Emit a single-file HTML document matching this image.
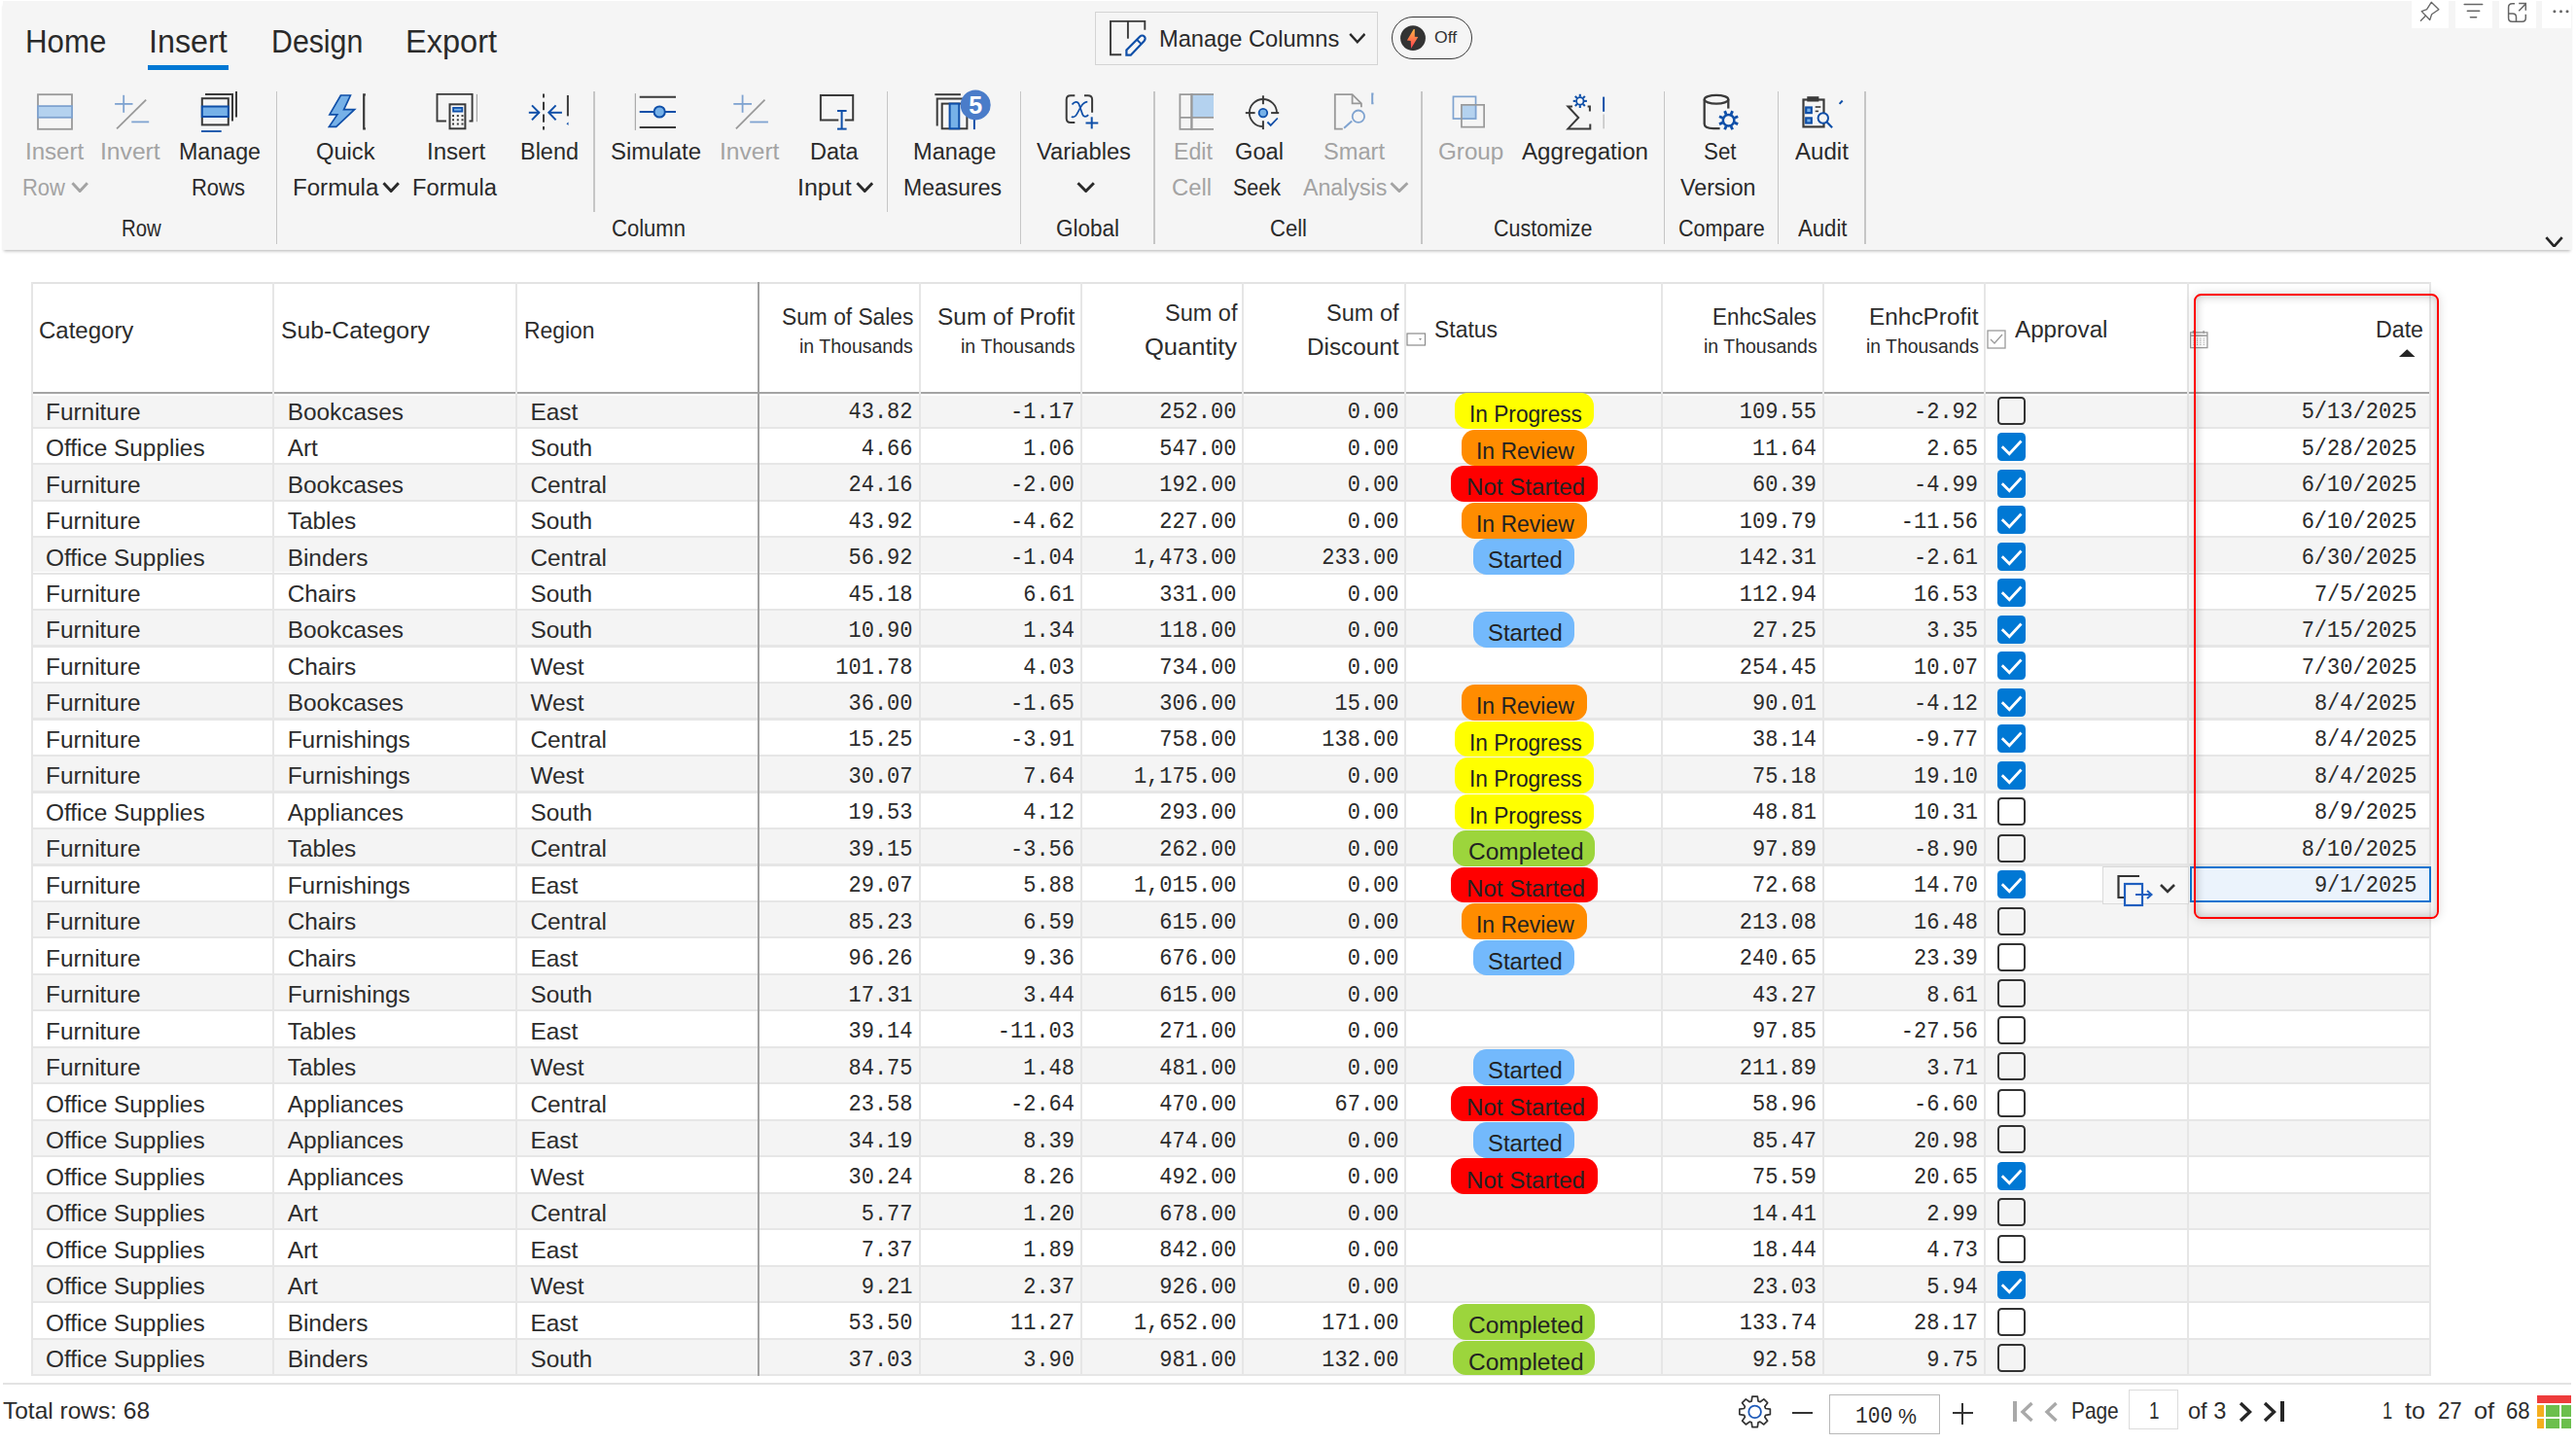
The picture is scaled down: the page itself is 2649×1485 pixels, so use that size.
<!DOCTYPE html><html><head><meta charset="utf-8"><style>
html,body{margin:0;padding:0;background:#fff;width:2649px;height:1485px;overflow:hidden}
#root{position:relative;width:2649px;height:1485px;overflow:hidden}
.t{position:absolute;white-space:nowrap}
.b{position:absolute;box-sizing:border-box}
</style></head><body><div id="root">
<div class="b" style="left:3.00px;top:1.00px;width:2641.00px;height:256.00px;background:#f5f5f5;box-shadow:0 2.5px 3px -1px rgba(0,0,0,0.25)"></div>
<div class="t" style="left:25.60px;top:20.41px;font-size:34.00px;line-height:44.20px;color:#2a2a2a;font-family:'Liberation Sans', sans-serif;transform:scale(0.9183,1.0000);transform-origin:0 33.89px;">Home</div>
<div class="t" style="left:153.00px;top:20.41px;font-size:34.00px;line-height:44.20px;color:#2a2a2a;font-family:'Liberation Sans', sans-serif;transform:scale(0.9490,1.0000);transform-origin:0 33.89px;">Insert</div>
<div class="t" style="left:278.50px;top:20.41px;font-size:34.00px;line-height:44.20px;color:#2a2a2a;font-family:'Liberation Sans', sans-serif;transform:scale(0.8910,1.0000);transform-origin:0 33.89px;">Design</div>
<div class="t" style="left:417.00px;top:20.41px;font-size:34.00px;line-height:44.20px;color:#2a2a2a;font-family:'Liberation Sans', sans-serif;transform:scale(0.9566,1.0000);transform-origin:0 33.89px;">Export</div>
<div class="b" style="left:151.50px;top:66.50px;width:83.40px;height:5.10px;background:#0078d4"></div>
<div class="b" style="left:1126.40px;top:11.50px;width:290.30px;height:55.90px;border:1.5px solid #d4d4d4"></div>
<div class="t" style="left:1191.70px;top:24.48px;font-size:24.30px;line-height:31.59px;color:#2a2a2a;font-family:'Liberation Sans', sans-serif;transform:scale(0.9730,1.0000);transform-origin:0 24.22px;">Manage Columns</div>
<svg class="b" style="left:1386.50px;top:33.40px" width="17.70" height="11.40" viewBox="0 0 17.7 11.4" fill="none"><polyline points="1.20,1.92 8.85,10.20 16.50,1.92" stroke="#2a2a2a" stroke-width="2.40" fill="none" stroke-linecap="butt" stroke-linejoin="miter"/></svg>
<div class="b" style="left:1431.30px;top:17.40px;width:82.50px;height:43.60px;border:1.6px solid #3a3a3a;border-radius:22px"></div>
<div class="t" style="left:1474.80px;top:28.35px;font-size:16.50px;line-height:21.45px;color:#333;font-family:'Liberation Sans', sans-serif;transform:scale(1.0668,1.0000);transform-origin:0 16.45px;">Off</div>
<div class="t" style="left:25.60px;top:140.98px;font-size:23.10px;line-height:30.03px;color:#a3a3a3;font-family:'Liberation Sans', sans-serif;transform:scale(1.0420,1.0000);transform-origin:0 23.02px;">Insert</div>
<div class="t" style="left:23.40px;top:177.58px;font-size:23.10px;line-height:30.03px;color:#a3a3a3;font-family:'Liberation Sans', sans-serif;transform:scale(0.9510,1.0000);transform-origin:0 23.02px;">Row</div>
<svg class="b" style="left:72.85px;top:185.85px" width="18.30" height="12.00" viewBox="0 0 18.3 12" fill="none"><polyline points="1.45,2.32 9.15,10.55 16.85,2.32" stroke="#a3a3a3" stroke-width="2.90" fill="none" stroke-linecap="butt" stroke-linejoin="miter"/></svg>
<div class="t" style="left:103.40px;top:140.98px;font-size:23.10px;line-height:30.03px;color:#a3a3a3;font-family:'Liberation Sans', sans-serif;transform:scale(1.0680,1.0000);transform-origin:0 23.02px;">Invert</div>
<div class="t" style="left:184.00px;top:140.98px;font-size:23.10px;line-height:30.03px;color:#2a2a2a;font-family:'Liberation Sans', sans-serif;transform:scale(1.0062,1.0000);transform-origin:0 23.02px;">Manage</div>
<div class="t" style="left:196.50px;top:177.58px;font-size:23.10px;line-height:30.03px;color:#2a2a2a;font-family:'Liberation Sans', sans-serif;transform:scale(0.9503,1.0000);transform-origin:0 23.02px;">Rows</div>
<div class="t" style="left:125.00px;top:220.48px;font-size:23.10px;line-height:30.03px;color:#2a2a2a;font-family:'Liberation Sans', sans-serif;transform:scale(0.8796,1.0000);transform-origin:0 23.02px;">Row</div>
<div class="t" style="left:325.00px;top:140.98px;font-size:23.10px;line-height:30.03px;color:#2a2a2a;font-family:'Liberation Sans', sans-serif;transform:scale(1.0256,1.0000);transform-origin:0 23.02px;">Quick</div>
<div class="t" style="left:301.00px;top:177.58px;font-size:23.10px;line-height:30.03px;color:#2a2a2a;font-family:'Liberation Sans', sans-serif;transform:scale(1.0433,1.0000);transform-origin:0 23.02px;">Formula</div>
<svg class="b" style="left:393.15px;top:185.85px" width="18.30" height="12.00" viewBox="0 0 18.3 12" fill="none"><polyline points="1.45,2.32 9.15,10.55 16.85,2.32" stroke="#2a2a2a" stroke-width="2.90" fill="none" stroke-linecap="butt" stroke-linejoin="miter"/></svg>
<div class="t" style="left:439.40px;top:140.98px;font-size:23.10px;line-height:30.03px;color:#2a2a2a;font-family:'Liberation Sans', sans-serif;transform:scale(1.0420,1.0000);transform-origin:0 23.02px;">Insert</div>
<div class="t" style="left:424.00px;top:177.58px;font-size:23.10px;line-height:30.03px;color:#2a2a2a;font-family:'Liberation Sans', sans-serif;transform:scale(1.0268,1.0000);transform-origin:0 23.02px;">Formula</div>
<div class="t" style="left:535.00px;top:140.98px;font-size:23.10px;line-height:30.03px;color:#2a2a2a;font-family:'Liberation Sans', sans-serif;transform:scale(1.0154,1.0000);transform-origin:0 23.02px;">Blend</div>
<div class="t" style="left:628.00px;top:140.98px;font-size:23.10px;line-height:30.03px;color:#2a2a2a;font-family:'Liberation Sans', sans-serif;transform:scale(1.0347,1.0000);transform-origin:0 23.02px;">Simulate</div>
<div class="t" style="left:739.60px;top:140.98px;font-size:23.10px;line-height:30.03px;color:#a3a3a3;font-family:'Liberation Sans', sans-serif;transform:scale(1.0628,1.0000);transform-origin:0 23.02px;">Invert</div>
<div class="t" style="left:833.00px;top:140.98px;font-size:23.10px;line-height:30.03px;color:#2a2a2a;font-family:'Liberation Sans', sans-serif;transform:scale(1.0162,1.0000);transform-origin:0 23.02px;">Data</div>
<div class="t" style="left:819.80px;top:177.58px;font-size:23.10px;line-height:30.03px;color:#2a2a2a;font-family:'Liberation Sans', sans-serif;transform:scale(1.0823,1.0000);transform-origin:0 23.02px;">Input</div>
<svg class="b" style="left:879.85px;top:185.85px" width="18.60" height="12.00" viewBox="0 0 18.6 12" fill="none"><polyline points="1.45,2.32 9.30,10.55 17.15,2.32" stroke="#2a2a2a" stroke-width="2.90" fill="none" stroke-linecap="butt" stroke-linejoin="miter"/></svg>
<div class="t" style="left:938.70px;top:140.98px;font-size:23.10px;line-height:30.03px;color:#2a2a2a;font-family:'Liberation Sans', sans-serif;transform:scale(1.0218,1.0000);transform-origin:0 23.02px;">Manage</div>
<div class="t" style="left:929.00px;top:177.58px;font-size:23.10px;line-height:30.03px;color:#2a2a2a;font-family:'Liberation Sans', sans-serif;transform:scale(0.9957,1.0000);transform-origin:0 23.02px;">Measures</div>
<div class="t" style="left:629.00px;top:220.48px;font-size:23.10px;line-height:30.03px;color:#2a2a2a;font-family:'Liberation Sans', sans-serif;transform:scale(0.9547,1.0000);transform-origin:0 23.02px;">Column</div>
<div class="t" style="left:1066.00px;top:140.98px;font-size:23.10px;line-height:30.03px;color:#2a2a2a;font-family:'Liberation Sans', sans-serif;transform:scale(1.0254,1.0000);transform-origin:0 23.02px;">Variables</div>
<svg class="b" style="left:1107.15px;top:185.85px" width="19.30" height="12.00" viewBox="0 0 19.3 12" fill="none"><polyline points="1.45,2.32 9.65,10.55 17.85,2.32" stroke="#2a2a2a" stroke-width="2.90" fill="none" stroke-linecap="butt" stroke-linejoin="miter"/></svg>
<div class="t" style="left:1086.00px;top:220.48px;font-size:23.10px;line-height:30.03px;color:#2a2a2a;font-family:'Liberation Sans', sans-serif;transform:scale(0.9733,1.0000);transform-origin:0 23.02px;">Global</div>
<div class="t" style="left:1207.00px;top:140.98px;font-size:23.10px;line-height:30.03px;color:#a3a3a3;font-family:'Liberation Sans', sans-serif;">Edit</div>
<div class="t" style="left:1204.50px;top:177.58px;font-size:23.10px;line-height:30.03px;color:#a3a3a3;font-family:'Liberation Sans', sans-serif;transform:scale(1.0301,1.0000);transform-origin:0 23.02px;">Cell</div>
<div class="t" style="left:1270.00px;top:140.98px;font-size:23.10px;line-height:30.03px;color:#2a2a2a;font-family:'Liberation Sans', sans-serif;transform:scale(1.0249,1.0000);transform-origin:0 23.02px;">Goal</div>
<div class="t" style="left:1268.00px;top:177.58px;font-size:23.10px;line-height:30.03px;color:#2a2a2a;font-family:'Liberation Sans', sans-serif;transform:scale(0.9299,1.0000);transform-origin:0 23.02px;">Seek</div>
<div class="t" style="left:1361.00px;top:140.98px;font-size:23.10px;line-height:30.03px;color:#a3a3a3;font-family:'Liberation Sans', sans-serif;transform:scale(1.0226,1.0000);transform-origin:0 23.02px;">Smart</div>
<div class="t" style="left:1339.80px;top:177.58px;font-size:23.10px;line-height:30.03px;color:#a3a3a3;font-family:'Liberation Sans', sans-serif;transform:scale(1.0044,1.0000);transform-origin:0 23.02px;">Analysis</div>
<svg class="b" style="left:1429.05px;top:185.85px" width="19.80" height="12.00" viewBox="0 0 19.8 12" fill="none"><polyline points="1.45,2.32 9.90,10.55 18.35,2.32" stroke="#a3a3a3" stroke-width="2.90" fill="none" stroke-linecap="butt" stroke-linejoin="miter"/></svg>
<div class="t" style="left:1306.00px;top:220.48px;font-size:23.10px;line-height:30.03px;color:#2a2a2a;font-family:'Liberation Sans', sans-serif;transform:scale(0.9547,1.0000);transform-origin:0 23.02px;">Cell</div>
<div class="t" style="left:1478.70px;top:140.98px;font-size:23.10px;line-height:30.03px;color:#a3a3a3;font-family:'Liberation Sans', sans-serif;transform:scale(1.0484,1.0000);transform-origin:0 23.02px;">Group</div>
<div class="t" style="left:1565.00px;top:140.98px;font-size:23.10px;line-height:30.03px;color:#2a2a2a;font-family:'Liberation Sans', sans-serif;transform:scale(1.0435,1.0000);transform-origin:0 23.02px;">Aggregation</div>
<div class="t" style="left:1536.00px;top:220.48px;font-size:23.10px;line-height:30.03px;color:#2a2a2a;font-family:'Liberation Sans', sans-serif;transform:scale(0.9310,1.0000);transform-origin:0 23.02px;">Customize</div>
<div class="t" style="left:1751.50px;top:140.98px;font-size:23.10px;line-height:30.03px;color:#2a2a2a;font-family:'Liberation Sans', sans-serif;transform:scale(0.9662,1.0000);transform-origin:0 23.02px;">Set</div>
<div class="t" style="left:1727.80px;top:177.58px;font-size:23.10px;line-height:30.03px;color:#2a2a2a;font-family:'Liberation Sans', sans-serif;transform:scale(1.0060,1.0000);transform-origin:0 23.02px;">Version</div>
<div class="t" style="left:1726.00px;top:220.48px;font-size:23.10px;line-height:30.03px;color:#2a2a2a;font-family:'Liberation Sans', sans-serif;transform:scale(0.9336,1.0000);transform-origin:0 23.02px;">Compare</div>
<div class="t" style="left:1846.30px;top:140.98px;font-size:23.10px;line-height:30.03px;color:#2a2a2a;font-family:'Liberation Sans', sans-serif;transform:scale(1.0428,1.0000);transform-origin:0 23.02px;">Audit</div>
<div class="t" style="left:1848.50px;top:220.48px;font-size:23.10px;line-height:30.03px;color:#2a2a2a;font-family:'Liberation Sans', sans-serif;transform:scale(0.9593,1.0000);transform-origin:0 23.02px;">Audit</div>
<div class="b" style="left:283.65px;top:93.50px;width:1.50px;height:157.50px;background:#c6c6c6"></div>
<div class="b" style="left:610.25px;top:93.50px;width:1.50px;height:124.30px;background:#c6c6c6"></div>
<div class="b" style="left:911.85px;top:93.50px;width:1.50px;height:124.30px;background:#c6c6c6"></div>
<div class="b" style="left:1048.85px;top:93.50px;width:1.50px;height:157.50px;background:#c6c6c6"></div>
<div class="b" style="left:1186.25px;top:93.50px;width:1.50px;height:157.50px;background:#c6c6c6"></div>
<div class="b" style="left:1461.25px;top:93.50px;width:1.50px;height:157.50px;background:#c6c6c6"></div>
<div class="b" style="left:1710.55px;top:93.50px;width:1.50px;height:157.50px;background:#c6c6c6"></div>
<div class="b" style="left:1827.85px;top:93.50px;width:1.50px;height:157.50px;background:#c6c6c6"></div>
<div class="b" style="left:1917.25px;top:93.50px;width:1.50px;height:157.50px;background:#c6c6c6"></div>
<svg class="b" style="left:2616.65px;top:241.65px" width="19.10" height="12.70" viewBox="0 0 19.1 12.7" fill="none"><polyline points="1.35,2.16 9.55,11.35 17.75,2.16" stroke="#262626" stroke-width="2.70" fill="none" stroke-linecap="butt" stroke-linejoin="miter"/></svg>
<div class="b" style="left:2480.00px;top:1.00px;width:38.00px;height:28.00px;background:#fff"></div>
<div class="b" style="left:2525.00px;top:1.00px;width:37.80px;height:28.00px;background:#fff"></div>
<div class="b" style="left:2570.00px;top:1.00px;width:38.00px;height:28.00px;background:#fff"></div>
<div class="b" style="left:2613.80px;top:1.00px;width:30.20px;height:28.00px;background:#fff"></div>
<svg class="b" style="left:0;top:0" width="2649" height="270" viewBox="0 0 2649 270" fill="none"><rect x="39.00" y="97.20" width="35.00" height="35.60" stroke="#999999" stroke-width="1.80" fill="none"/><rect x="39.00" y="109.10" width="35.00" height="11.70" stroke="#7fa3d0" stroke-width="1.80" fill="#b4d2ef"/><line x1="127.20" y1="97.80" x2="127.20" y2="115.80" stroke="#7fa3d0" stroke-width="1.80" stroke-linecap="butt"/><line x1="118.10" y1="106.90" x2="136.50" y2="106.90" stroke="#7fa3d0" stroke-width="1.80" stroke-linecap="butt"/><line x1="120.10" y1="132.40" x2="150.20" y2="102.60" stroke="#999999" stroke-width="1.80" stroke-linecap="butt"/><line x1="135.30" y1="125.40" x2="153.20" y2="125.40" stroke="#7fa3d0" stroke-width="1.80" stroke-linecap="butt"/><rect x="207.80" y="101.20" width="27.00" height="27.20" stroke="#3a3a3a" stroke-width="2.00" fill="none"/><rect x="207.80" y="109.50" width="27.00" height="10.50" stroke="#0f4fa8" stroke-width="2.00" fill="#76b1e8"/><path d="M211,97 L239,97 L239,124.5" stroke="#3a3a3a" stroke-width="2.00" fill="none" /><line x1="243.00" y1="94.10" x2="243.00" y2="120.60" stroke="#3a3a3a" stroke-width="2.00" stroke-linecap="butt"/><line x1="207.00" y1="135.00" x2="227.70" y2="135.00" stroke="#0f4fa8" stroke-width="1.80" stroke-linecap="butt"/><path d="M350.4,98 L360.4,98 L353.6,112.6 L364.6,112.6 L345.7,130.4 L338.4,130.4 L346.8,117.9 L338.9,117.9 Z" stroke="#0f4fa8" stroke-width="1.70" fill="#76b1e8" stroke-linejoin="miter"/><path d="M375.9,97.4 L374.2,97.4 L374.2,132.3 L375.9,132.3" stroke="#3a3a3a" stroke-width="2.20" fill="none" /><path d="M458.9,124.5 L449.5,124.5 L449.5,96.9 L485.6,96.9 L485.6,124.5 L482.5,124.5" stroke="#3a3a3a" stroke-width="1.90" fill="none" /><rect x="462.50" y="107.30" width="15.90" height="25.00" stroke="#3a3a3a" stroke-width="2.00" fill="none"/><rect x="466.10" y="110.90" width="9.20" height="3.70" stroke="#0f4fa8" stroke-width="1.80" fill="#76b1e8"/><rect x="465.00" y="118.10" width="2" height="2" fill="#3a3a3a"/><rect x="465.00" y="122.30" width="2" height="2" fill="#3a3a3a"/><rect x="465.00" y="126.50" width="2" height="2" fill="#3a3a3a"/><rect x="469.80" y="118.10" width="2" height="2" fill="#3a3a3a"/><rect x="469.80" y="122.30" width="2" height="2" fill="#3a3a3a"/><rect x="469.80" y="126.50" width="2" height="2" fill="#3a3a3a"/><rect x="474.50" y="118.10" width="2" height="2" fill="#3a3a3a"/><rect x="474.50" y="122.30" width="2" height="2" fill="#3a3a3a"/><rect x="474.50" y="126.50" width="2" height="2" fill="#3a3a3a"/><line x1="490.40" y1="96.90" x2="490.40" y2="125.20" stroke="#9a9a9a" stroke-width="1.00" stroke-linecap="butt"/><line x1="559.00" y1="96.40" x2="559.00" y2="133.60" stroke="#3a3a3a" stroke-width="2.00" stroke-linecap="butt"/><line x1="559" y1="96.4" x2="559" y2="133.6" stroke="#f5f5f5" stroke-width="2.4" stroke-dasharray="0 4.2 4.2 4.2" /><line x1="543.80" y1="115.80" x2="554.80" y2="115.80" stroke="#0f4fa8" stroke-width="2.00" stroke-linecap="butt"/><path d="M547,108.4 L554.3,115.8 L547,123.4" stroke="#0f4fa8" stroke-width="2.00" fill="none" /><line x1="564.30" y1="115.80" x2="577.90" y2="115.80" stroke="#0f4fa8" stroke-width="2.00" stroke-linecap="butt"/><path d="M571.6,108.4 L564.3,115.8 L571.6,123.4" stroke="#0f4fa8" stroke-width="2.00" fill="none" /><line x1="583.90" y1="98.00" x2="583.90" y2="119.40" stroke="#3a3a3a" stroke-width="2.00" stroke-linecap="butt"/><path d="M584.5,125.5 L582.5,127.3 L584.5,129 Z" fill="#0f4fa8"/><line x1="653.30" y1="96.10" x2="653.30" y2="133.90" stroke="#9a9a9a" stroke-width="1.00" stroke-linecap="butt"/><line x1="657.70" y1="99.80" x2="695.00" y2="99.80" stroke="#3a3a3a" stroke-width="2.00" stroke-linecap="butt"/><line x1="657.70" y1="130.90" x2="695.00" y2="130.90" stroke="#3a3a3a" stroke-width="2.00" stroke-linecap="butt"/><line x1="657.70" y1="115.00" x2="695.00" y2="115.00" stroke="#0f4fa8" stroke-width="2.00" stroke-linecap="butt"/><circle cx="678.20" cy="115.00" r="5.60" stroke="#0f4fa8" stroke-width="2.00" fill="#76b1e8"/><line x1="763.60" y1="97.60" x2="763.60" y2="115.80" stroke="#7fa3d0" stroke-width="1.80" stroke-linecap="butt"/><line x1="754.30" y1="106.90" x2="773.00" y2="106.90" stroke="#7fa3d0" stroke-width="1.80" stroke-linecap="butt"/><line x1="756.90" y1="132.40" x2="786.50" y2="102.60" stroke="#999999" stroke-width="1.80" stroke-linecap="butt"/><line x1="771.20" y1="125.50" x2="789.90" y2="125.50" stroke="#7fa3d0" stroke-width="1.80" stroke-linecap="butt"/><path d="M862.3,123.5 L843.9,123.5 L843.9,97.9 L877.2,97.9 L877.2,123.5 L868.8,123.5" stroke="#3a3a3a" stroke-width="2.00" fill="none" /><line x1="865.60" y1="114.00" x2="865.60" y2="132.60" stroke="#0f4fa8" stroke-width="2.00" stroke-linecap="butt"/><line x1="861.00" y1="114.00" x2="870.60" y2="114.00" stroke="#0f4fa8" stroke-width="2.00" stroke-linecap="butt"/><line x1="861.00" y1="132.60" x2="870.60" y2="132.60" stroke="#0f4fa8" stroke-width="2.00" stroke-linecap="butt"/><line x1="961.30" y1="97.20" x2="987.90" y2="97.20" stroke="#3a3a3a" stroke-width="2.00" stroke-linecap="butt"/><path d="M963.7,129.6 L963.7,101.5 L990,101.5" stroke="#3a3a3a" stroke-width="2.00" fill="none" /><rect x="968.70" y="106.60" width="25.70" height="25.70" stroke="#3a3a3a" stroke-width="2.00" fill="none"/><rect x="976.60" y="106.60" width="9.70" height="25.70" stroke="#0f4fa8" stroke-width="2.00" fill="#76b1e8"/><line x1="1001.90" y1="123.00" x2="1001.90" y2="133.10" stroke="#0f4fa8" stroke-width="2.00" stroke-linecap="butt"/><circle cx="1003.20" cy="107.90" r="15.50" stroke="none" stroke-width="0.00" fill="#4a7cc9"/><text x="1003.2" y="116.8" text-anchor="middle" font-family="Liberation Sans" font-weight="bold" font-size="25" fill="#fff">5</text><path d="M1105.3,98.2 L1101,98.2 Q1096.7,98.2 1096.7,102.5 L1096.7,121.8 Q1096.7,126.1 1101,126.1 L1105.3,126.1" stroke="#3a3a3a" stroke-width="2.00" fill="none" /><path d="M1115,98.2 L1118.8,98.2 Q1123.1,98.2 1123.1,102.5 L1123.1,115.7" stroke="#3a3a3a" stroke-width="2.00" fill="none" /><path d="M1102.5,107.5 C1104.5,104.3 1108.3,103.6 1109.6,107.2 L1113.2,117.6 C1114.3,120.6 1117.3,120.3 1119.2,118.1" stroke="#0f4fa8" stroke-width="1.70" fill="none" /><path d="M1118.3,104.6 C1115.2,104.8 1113,107 1111.2,110.3 L1107.2,117.6 C1105.8,120.2 1103.7,120.8 1101.8,119.9" stroke="#0f4fa8" stroke-width="1.70" fill="none" /><line x1="1122.70" y1="120.30" x2="1122.70" y2="132.40" stroke="#0f4fa8" stroke-width="2.00" stroke-linecap="butt"/><line x1="1116.50" y1="126.50" x2="1129.30" y2="126.50" stroke="#0f4fa8" stroke-width="2.00" stroke-linecap="butt"/><rect x="1225.4" y="96.2" width="22.6" height="24.7" fill="#b4d2ef"/><path d="M1248,97.1 L1213.4,97.1 L1213.4,132.8 L1248,132.8" stroke="#999999" stroke-width="1.80" fill="none" /><line x1="1213.40" y1="120.90" x2="1248.00" y2="120.90" stroke="#999999" stroke-width="1.80" stroke-linecap="butt"/><line x1="1225.40" y1="96.20" x2="1225.40" y2="133.70" stroke="#999999" stroke-width="2.40" stroke-linecap="butt"/><path d="M1313,116.1 A14.1,14.1 0 1 0 1298.9,130.2" stroke="#3a3a3a" stroke-width="1.80" fill="none" /><line x1="1298.90" y1="98.30" x2="1298.90" y2="107.20" stroke="#3a3a3a" stroke-width="2.00" stroke-linecap="butt"/><line x1="1280.80" y1="116.10" x2="1290.60" y2="116.10" stroke="#3a3a3a" stroke-width="2.00" stroke-linecap="butt"/><line x1="1307.10" y1="116.10" x2="1315.20" y2="116.10" stroke="#3a3a3a" stroke-width="2.00" stroke-linecap="butt"/><line x1="1298.90" y1="124.20" x2="1298.90" y2="133.10" stroke="#3a3a3a" stroke-width="2.00" stroke-linecap="butt"/><circle cx="1298.90" cy="116.10" r="4.30" stroke="#0f4fa8" stroke-width="1.80" fill="#76b1e8"/><path d="M1303.4,125.5 L1306.7,128.9 L1313.8,121.5" stroke="#0f4fa8" stroke-width="1.80" fill="none" /><path d="M1380.8,132.6 L1372.8,132.6 L1372.8,97.1 L1390.6,97.1 L1399.9,106.3 L1399.9,110.3" stroke="#999999" stroke-width="1.80" fill="none" /><path d="M1390.6,97.1 L1390.6,106.3 L1399.9,106.3" stroke="#999999" stroke-width="1.80" fill="none" /><circle cx="1396.90" cy="119.70" r="6.20" stroke="#7fa3d0" stroke-width="1.80" fill="none"/><line x1="1390.20" y1="124.60" x2="1382.10" y2="131.80" stroke="#7fa3d0" stroke-width="2.00" stroke-linecap="butt"/><path d="M1412.5,96.5 L1411.2,96.5 L1411.2,106.3 L1412.5,106.3" stroke="#7fa3d0" stroke-width="2.00" fill="none" /><rect x="1502.1" y="107" width="16.3" height="15.9" fill="#b4d2ef"/><rect x="1494.45" y="99.35" width="23.10" height="22.70" stroke="#7fa3d0" stroke-width="1.70" fill="none"/><rect x="1502.95" y="107.85" width="23.20" height="22.80" stroke="#999999" stroke-width="1.70" fill="none"/><path d="M1617,109.4 L1612.4,109.4 L1623.2,121 L1612.4,132.4 L1635.3,132.4 L1635.3,127.6" stroke="#3a3a3a" stroke-width="2.00" fill="none" stroke-linejoin="miter"/><path d="M1632.6,109.4 L1634.9,109.4 L1634.9,114.4" stroke="#3a3a3a" stroke-width="2.00" fill="none" /><circle cx="1624.80" cy="103.90" r="3.70" stroke="#0f4fa8" stroke-width="1.80" fill="none"/><line x1="1629.04" y1="103.90" x2="1631.90" y2="103.90" stroke="#0f4fa8" stroke-width="2.07"/><line x1="1627.80" y1="106.90" x2="1629.82" y2="108.92" stroke="#0f4fa8" stroke-width="2.07"/><line x1="1624.80" y1="108.14" x2="1624.80" y2="111.00" stroke="#0f4fa8" stroke-width="2.07"/><line x1="1621.80" y1="106.90" x2="1619.78" y2="108.92" stroke="#0f4fa8" stroke-width="2.07"/><line x1="1620.56" y1="103.90" x2="1617.70" y2="103.90" stroke="#0f4fa8" stroke-width="2.07"/><line x1="1621.80" y1="100.90" x2="1619.78" y2="98.88" stroke="#0f4fa8" stroke-width="2.07"/><line x1="1624.80" y1="99.66" x2="1624.80" y2="96.80" stroke="#0f4fa8" stroke-width="2.07"/><line x1="1627.80" y1="100.90" x2="1629.82" y2="98.88" stroke="#0f4fa8" stroke-width="2.07"/><line x1="1649.10" y1="99.60" x2="1649.10" y2="114.80" stroke="#0f4fa8" stroke-width="2.00" stroke-linecap="butt"/><line x1="1649.10" y1="117.50" x2="1649.10" y2="132.30" stroke="#aaaaaa" stroke-width="1.00" stroke-linecap="butt"/><ellipse cx="1765" cy="102.3" rx="12.3" ry="4.4" stroke="#3a3a3a" stroke-width="2.3" fill="none"/><path d="M1752.7,102.3 L1752.7,127.5 Q1752.7,131.9 1762,132.2 L1768.6,132.2" stroke="#3a3a3a" stroke-width="2.30" fill="none" /><line x1="1777.30" y1="102.30" x2="1777.30" y2="111.60" stroke="#3a3a3a" stroke-width="2.30" stroke-linecap="butt"/><circle cx="1777.60" cy="123.70" r="5.75" stroke="#0f4fa8" stroke-width="2.50" fill="none"/><line x1="1783.61" y1="126.19" x2="1787.21" y2="127.68" stroke="#0f4fa8" stroke-width="2.88"/><line x1="1780.09" y1="129.71" x2="1781.58" y2="133.31" stroke="#0f4fa8" stroke-width="2.88"/><line x1="1775.11" y1="129.71" x2="1773.62" y2="133.31" stroke="#0f4fa8" stroke-width="2.88"/><line x1="1771.59" y1="126.19" x2="1767.99" y2="127.68" stroke="#0f4fa8" stroke-width="2.88"/><line x1="1771.59" y1="121.21" x2="1767.99" y2="119.72" stroke="#0f4fa8" stroke-width="2.88"/><line x1="1775.11" y1="117.69" x2="1773.62" y2="114.09" stroke="#0f4fa8" stroke-width="2.88"/><line x1="1780.09" y1="117.69" x2="1781.58" y2="114.09" stroke="#0f4fa8" stroke-width="2.88"/><line x1="1783.61" y1="121.21" x2="1787.21" y2="119.72" stroke="#0f4fa8" stroke-width="2.88"/><rect x="1854.50" y="102.50" width="21.00" height="27.90" stroke="#3a3a3a" stroke-width="2.20" fill="none"/><rect x="1858.3" y="99.2" width="12.1" height="5.3" fill="#3a3a3a"/><rect x="1857.20" y="110.50" width="5.60" height="5.60" stroke="#0f4fa8" stroke-width="2.20" fill="#76b1e8"/><rect x="1857.20" y="121.40" width="5.60" height="5.10" stroke="#0f4fa8" stroke-width="2.20" fill="#76b1e8"/><line x1="1866.70" y1="110.00" x2="1872.30" y2="110.00" stroke="#3a3a3a" stroke-width="1.60" stroke-linecap="butt"/><line x1="1866.70" y1="114.40" x2="1870.10" y2="114.40" stroke="#3a3a3a" stroke-width="1.60" stroke-linecap="butt"/><circle cx="1874.80" cy="121.50" r="5.20" stroke="#0f4fa8" stroke-width="2.00" fill="#f5f5f5"/><line x1="1878.60" y1="125.50" x2="1884.10" y2="131.20" stroke="#0f4fa8" stroke-width="2.20" stroke-linecap="butt"/><line x1="1891.60" y1="106.90" x2="1894.70" y2="103.50" stroke="#0f4fa8" stroke-width="2.00" stroke-linecap="butt"/><path d="M1177.3,30.7 L1177.3,21.9 L1142,21.9 L1142,56.3 L1153.2,56.3" stroke="#3a3a3a" stroke-width="1.90" fill="none" /><line x1="1159.90" y1="21.90" x2="1159.90" y2="39.70" stroke="#3a3a3a" stroke-width="1.90" stroke-linecap="butt"/><path d="M1158.4,56.7 L1158.4,51.4 L1172.3,37.5 A3.1,3.1 0 0 1 1176.7,41.9 L1162.8,56.7 Z" stroke="#0f4fa8" stroke-width="2.20" fill="none" stroke-linejoin="miter"/><line x1="1169.10" y1="40.70" x2="1173.50" y2="45.10" stroke="#0f4fa8" stroke-width="2.00" stroke-linecap="butt"/><defs><linearGradient id="lg" x1="0" y1="0" x2="0" y2="1"><stop offset="0" stop-color="#fdb643"/><stop offset="1" stop-color="#ff3d50"/></linearGradient></defs><circle cx="1453.00" cy="39.20" r="12.90" stroke="none" stroke-width="0.00" fill="#333333"/><path d="M1453.7,29.9 L1454.8,29.9 L1454.8,37.8 L1458.3,38.1 L1451.1,49.8 L1450.7,42 L1446.9,41.4 Z" fill="url(#lg)"/><path d="M2490.2,11.6 L2495.6,9.7 L2500.2,2.3 L2507.9,9.7 L2500.6,14.7 L2498.7,20.5 Z" stroke="#666666" stroke-width="1.30" fill="none" stroke-linejoin="round"/><line x1="2489.40" y1="21.20" x2="2494.40" y2="16.20" stroke="#666666" stroke-width="1.30" stroke-linecap="round"/><line x1="2534.20" y1="4.60" x2="2552.70" y2="4.60" stroke="#666666" stroke-width="1.50" stroke-linecap="round"/><line x1="2537.30" y1="11.20" x2="2549.70" y2="11.20" stroke="#666666" stroke-width="1.50" stroke-linecap="round"/><line x1="2540.40" y1="17.80" x2="2546.60" y2="17.80" stroke="#666666" stroke-width="1.50" stroke-linecap="round"/><path d="M2586,3.7 L2583.4,3.7 Q2579.6,3.7 2579.6,7.5 L2579.6,18.4 Q2579.6,22.2 2583.4,22.2 L2593.5,22.2 Q2597.3,22.2 2597.3,18.4 L2597.3,14.7" stroke="#666666" stroke-width="1.50" fill="none" /><path d="M2579.6,13.9 L2583.8,13.9 Q2587.5,13.9 2587.5,17.6 L2587.5,22.2" stroke="#666666" stroke-width="1.50" fill="none" /><path d="M2590.2,11.2 L2597.2,3.9 M2590.2,3.6 L2597.3,3.6 L2597.3,10.8" stroke="#666666" stroke-width="1.50" fill="none" /><circle cx="2626.90" cy="11.70" r="1.50" stroke="none" stroke-width="0.00" fill="#666666"/><circle cx="2633.50" cy="11.70" r="1.50" stroke="none" stroke-width="0.00" fill="#666666"/><circle cx="2640.00" cy="11.70" r="1.50" stroke="none" stroke-width="0.00" fill="#666666"/></svg>
<div class="b" style="left:33.00px;top:403.30px;width:2466.00px;height:35.28px;background:#f4f4f4"></div>
<div class="b" style="left:33.00px;top:438.58px;width:2466.00px;height:2.20px;background:#e6e6e6"></div>
<div class="b" style="left:33.00px;top:476.06px;width:2466.00px;height:2.20px;background:#e6e6e6"></div>
<div class="b" style="left:33.00px;top:478.26px;width:2466.00px;height:35.28px;background:#f4f4f4"></div>
<div class="b" style="left:33.00px;top:513.54px;width:2466.00px;height:2.20px;background:#e6e6e6"></div>
<div class="b" style="left:33.00px;top:551.02px;width:2466.00px;height:2.20px;background:#e6e6e6"></div>
<div class="b" style="left:33.00px;top:553.22px;width:2466.00px;height:35.28px;background:#f4f4f4"></div>
<div class="b" style="left:33.00px;top:588.50px;width:2466.00px;height:2.20px;background:#e6e6e6"></div>
<div class="b" style="left:33.00px;top:625.98px;width:2466.00px;height:2.20px;background:#e6e6e6"></div>
<div class="b" style="left:33.00px;top:628.18px;width:2466.00px;height:35.28px;background:#f4f4f4"></div>
<div class="b" style="left:33.00px;top:663.46px;width:2466.00px;height:2.20px;background:#e6e6e6"></div>
<div class="b" style="left:33.00px;top:700.94px;width:2466.00px;height:2.20px;background:#e6e6e6"></div>
<div class="b" style="left:33.00px;top:703.14px;width:2466.00px;height:35.28px;background:#f4f4f4"></div>
<div class="b" style="left:33.00px;top:738.42px;width:2466.00px;height:2.20px;background:#e6e6e6"></div>
<div class="b" style="left:33.00px;top:775.90px;width:2466.00px;height:2.20px;background:#e6e6e6"></div>
<div class="b" style="left:33.00px;top:778.10px;width:2466.00px;height:35.28px;background:#f4f4f4"></div>
<div class="b" style="left:33.00px;top:813.38px;width:2466.00px;height:2.20px;background:#e6e6e6"></div>
<div class="b" style="left:33.00px;top:850.86px;width:2466.00px;height:2.20px;background:#e6e6e6"></div>
<div class="b" style="left:33.00px;top:853.06px;width:2466.00px;height:35.28px;background:#f4f4f4"></div>
<div class="b" style="left:33.00px;top:888.34px;width:2466.00px;height:2.20px;background:#e6e6e6"></div>
<div class="b" style="left:33.00px;top:925.82px;width:2466.00px;height:2.20px;background:#e6e6e6"></div>
<div class="b" style="left:33.00px;top:928.02px;width:2466.00px;height:35.28px;background:#f4f4f4"></div>
<div class="b" style="left:33.00px;top:963.30px;width:2466.00px;height:2.20px;background:#e6e6e6"></div>
<div class="b" style="left:33.00px;top:1000.78px;width:2466.00px;height:2.20px;background:#e6e6e6"></div>
<div class="b" style="left:33.00px;top:1002.98px;width:2466.00px;height:35.28px;background:#f4f4f4"></div>
<div class="b" style="left:33.00px;top:1038.26px;width:2466.00px;height:2.20px;background:#e6e6e6"></div>
<div class="b" style="left:33.00px;top:1075.74px;width:2466.00px;height:2.20px;background:#e6e6e6"></div>
<div class="b" style="left:33.00px;top:1077.94px;width:2466.00px;height:35.28px;background:#f4f4f4"></div>
<div class="b" style="left:33.00px;top:1113.22px;width:2466.00px;height:2.20px;background:#e6e6e6"></div>
<div class="b" style="left:33.00px;top:1150.70px;width:2466.00px;height:2.20px;background:#e6e6e6"></div>
<div class="b" style="left:33.00px;top:1152.90px;width:2466.00px;height:35.28px;background:#f4f4f4"></div>
<div class="b" style="left:33.00px;top:1188.18px;width:2466.00px;height:2.20px;background:#e6e6e6"></div>
<div class="b" style="left:33.00px;top:1225.66px;width:2466.00px;height:2.20px;background:#e6e6e6"></div>
<div class="b" style="left:33.00px;top:1227.86px;width:2466.00px;height:35.28px;background:#f4f4f4"></div>
<div class="b" style="left:33.00px;top:1263.14px;width:2466.00px;height:2.20px;background:#e6e6e6"></div>
<div class="b" style="left:33.00px;top:1300.62px;width:2466.00px;height:2.20px;background:#e6e6e6"></div>
<div class="b" style="left:33.00px;top:1302.82px;width:2466.00px;height:35.28px;background:#f4f4f4"></div>
<div class="b" style="left:33.00px;top:1338.10px;width:2466.00px;height:2.20px;background:#e6e6e6"></div>
<div class="b" style="left:33.00px;top:1375.58px;width:2466.00px;height:2.20px;background:#e6e6e6"></div>
<div class="b" style="left:33.00px;top:1377.78px;width:2466.00px;height:35.28px;background:#f4f4f4"></div>
<div class="b" style="left:33.00px;top:1413.06px;width:2466.00px;height:2.20px;background:#e6e6e6"></div>
<div class="b" style="left:33.00px;top:402.50px;width:2466.00px;height:4.50px;background:#fff"></div>
<div class="b" style="left:33.00px;top:402.50px;width:2466.00px;height:2.50px;background:#a4a4a4"></div>
<div class="b" style="left:32.00px;top:289.80px;width:2468.00px;height:2.00px;background:#e3e3e3"></div>
<div class="b" style="left:32.00px;top:289.80px;width:2.00px;height:1125.46px;background:#e6e6e6"></div>
<div class="b" style="left:279.60px;top:289.80px;width:2.00px;height:1125.46px;background:#e6e6e6"></div>
<div class="b" style="left:529.70px;top:289.80px;width:2.00px;height:1125.46px;background:#e6e6e6"></div>
<div class="b" style="left:778.50px;top:289.80px;width:2.00px;height:1125.46px;background:#a2a2a2"></div>
<div class="b" style="left:944.60px;top:289.80px;width:2.00px;height:1125.46px;background:#e6e6e6"></div>
<div class="b" style="left:1110.60px;top:289.80px;width:2.00px;height:1125.46px;background:#e6e6e6"></div>
<div class="b" style="left:1277.20px;top:289.80px;width:2.00px;height:1125.46px;background:#e6e6e6"></div>
<div class="b" style="left:1443.80px;top:289.80px;width:2.00px;height:1125.46px;background:#e6e6e6"></div>
<div class="b" style="left:1707.70px;top:289.80px;width:2.00px;height:1125.46px;background:#e6e6e6"></div>
<div class="b" style="left:1873.70px;top:289.80px;width:2.00px;height:1125.46px;background:#e6e6e6"></div>
<div class="b" style="left:2040.30px;top:289.80px;width:2.00px;height:1125.46px;background:#e6e6e6"></div>
<div class="b" style="left:2248.80px;top:289.80px;width:2.00px;height:1125.46px;background:#e6e6e6"></div>
<div class="b" style="left:2498.00px;top:289.80px;width:2.00px;height:1125.46px;background:#e6e6e6"></div>
<div class="t" style="left:40.20px;top:323.88px;font-size:24.60px;line-height:31.98px;color:#2c2c2c;font-family:'Liberation Sans', sans-serif;transform:scale(0.9757,1.0000);transform-origin:0 24.52px;">Category</div>
<div class="t" style="left:288.80px;top:324.38px;font-size:24.60px;line-height:31.98px;color:#2c2c2c;font-family:'Liberation Sans', sans-serif;transform:scale(1.0067,1.0000);transform-origin:0 24.52px;">Sub-Category</div>
<div class="t" style="left:538.80px;top:324.38px;font-size:24.60px;line-height:31.98px;color:#2c2c2c;font-family:'Liberation Sans', sans-serif;transform:scale(0.9287,1.0000);transform-origin:0 24.52px;">Region</div>
<div class="t" style="left:803.70px;top:310.28px;font-size:24.60px;line-height:31.98px;color:#2c2c2c;font-family:'Liberation Sans', sans-serif;transform:scale(0.9255,1.0000);transform-origin:0 24.52px;">Sum of Sales</div>
<div class="t" style="left:822.30px;top:343.47px;font-size:20.50px;line-height:26.65px;color:#2c2c2c;font-family:'Liberation Sans', sans-serif;transform:scale(0.9518,1.0000);transform-origin:0 20.43px;">in Thousands</div>
<div class="t" style="left:964.30px;top:310.28px;font-size:24.60px;line-height:31.98px;color:#2c2c2c;font-family:'Liberation Sans', sans-serif;transform:scale(0.9938,1.0000);transform-origin:0 24.52px;">Sum of Profit</div>
<div class="t" style="left:988.00px;top:343.47px;font-size:20.50px;line-height:26.65px;color:#2c2c2c;font-family:'Liberation Sans', sans-serif;transform:scale(0.9583,1.0000);transform-origin:0 20.43px;">in Thousands</div>
<div class="t" style="left:1197.50px;top:305.78px;font-size:24.60px;line-height:31.98px;color:#2c2c2c;font-family:'Liberation Sans', sans-serif;transform:scale(0.9553,1.0000);transform-origin:0 24.52px;">Sum of</div>
<div class="t" style="left:1177.00px;top:341.08px;font-size:24.60px;line-height:31.98px;color:#2c2c2c;font-family:'Liberation Sans', sans-serif;transform:scale(1.0370,1.0000);transform-origin:0 24.52px;">Quantity</div>
<div class="t" style="left:1363.80px;top:305.78px;font-size:24.60px;line-height:31.98px;color:#2c2c2c;font-family:'Liberation Sans', sans-serif;transform:scale(0.9579,1.0000);transform-origin:0 24.52px;">Sum of</div>
<div class="t" style="left:1344.00px;top:341.08px;font-size:24.60px;line-height:31.98px;color:#2c2c2c;font-family:'Liberation Sans', sans-serif;transform:scale(0.9873,1.0000);transform-origin:0 24.52px;">Discount</div>
<div class="t" style="left:1475.00px;top:323.38px;font-size:24.60px;line-height:31.98px;color:#2c2c2c;font-family:'Liberation Sans', sans-serif;transform:scale(0.9320,1.0000);transform-origin:0 24.52px;">Status</div>
<div class="t" style="left:1761.30px;top:309.68px;font-size:24.60px;line-height:31.98px;color:#2c2c2c;font-family:'Liberation Sans', sans-serif;transform:scale(0.9106,1.0000);transform-origin:0 24.52px;">EnhcSales</div>
<div class="t" style="left:1751.70px;top:342.87px;font-size:20.50px;line-height:26.65px;color:#2c2c2c;font-family:'Liberation Sans', sans-serif;transform:scale(0.9510,1.0000);transform-origin:0 20.43px;">in Thousands</div>
<div class="t" style="left:1922.00px;top:309.68px;font-size:24.60px;line-height:31.98px;color:#2c2c2c;font-family:'Liberation Sans', sans-serif;transform:scale(0.9914,1.0000);transform-origin:0 24.52px;">EnhcProfit</div>
<div class="t" style="left:1918.50px;top:342.87px;font-size:20.50px;line-height:26.65px;color:#2c2c2c;font-family:'Liberation Sans', sans-serif;transform:scale(0.9453,1.0000);transform-origin:0 20.43px;">in Thousands</div>
<div class="t" style="left:2072.00px;top:323.48px;font-size:24.60px;line-height:31.98px;color:#2c2c2c;font-family:'Liberation Sans', sans-serif;transform:scale(0.9836,1.0000);transform-origin:0 24.52px;">Approval</div>
<div class="t" style="left:2443.00px;top:323.48px;font-size:24.60px;line-height:31.98px;color:#2c2c2c;font-family:'Liberation Sans', sans-serif;transform:scale(0.9431,1.0000);transform-origin:0 24.52px;">Date</div>
<svg class="b" style="left:2466.00px;top:359.00px" width="18.50" height="8.50" viewBox="0 0 18.5 8.5" fill="none"><polygon points="1,8 9.25,0.3 17.5,8" fill="#252525"/></svg>
<svg class="b" style="left:1446.00px;top:342.00px" width="21.00" height="14.00" viewBox="0 0 21 14" fill="none"><rect x="1" y="1" width="18.5" height="12" stroke="#8a8a8a" stroke-width="1.2"/><polyline points="13,6 14.5,8 16,6" fill="#8a8a8a"/></svg>
<svg class="b" style="left:2043.00px;top:339.00px" width="21.00" height="20.00" viewBox="0 0 21 20" fill="none"><rect x="1" y="1" width="18" height="18" stroke="#9a9a9a" stroke-width="1.3"/><polyline points="4,10 8,14 16,5" stroke="#9a9a9a" stroke-width="1.3"/></svg>
<svg class="b" style="left:2250.00px;top:338.00px" width="22.00" height="22.00" viewBox="0 0 22 22" fill="none"><rect x="2.6" y="3.9" width="17.3" height="15.7" stroke="#999" stroke-width="1.3"/><line x1="2.6" y1="7.2" x2="19.9" y2="7.2" stroke="#999" stroke-width="1.5"/><line x1="5.4" y1="2" x2="5.4" y2="5" stroke="#999" stroke-width="1.3"/><line x1="16.1" y1="2" x2="16.1" y2="5" stroke="#999" stroke-width="1.3"/><line x1="6.0" y1="9.5" x2="6.0" y2="17.5" stroke="#aaa" stroke-width="1.1" stroke-dasharray="1.1 1"/><line x1="9.6" y1="9.5" x2="9.6" y2="17.5" stroke="#aaa" stroke-width="1.1" stroke-dasharray="1.1 1"/><line x1="12.9" y1="9.5" x2="12.9" y2="17.5" stroke="#aaa" stroke-width="1.1" stroke-dasharray="1.1 1"/><line x1="16.3" y1="9.5" x2="16.3" y2="17.5" stroke="#aaa" stroke-width="1.1" stroke-dasharray="1.1 1"/></svg>
<div class="b" style="left:2252.40px;top:890.94px;width:247.50px;height:37.20px;background:#ebf3fc;border:2px solid #0f74d0"></div>
<div class="t" style="left:47.00px;top:407.58px;font-size:24.40px;line-height:31.72px;color:#2c2c2c;font-family:'Liberation Sans', sans-serif;">Furniture</div>
<div class="t" style="left:295.70px;top:407.58px;font-size:24.40px;line-height:31.72px;color:#2c2c2c;font-family:'Liberation Sans', sans-serif;">Bookcases</div>
<div class="t" style="left:545.40px;top:407.58px;font-size:24.40px;line-height:31.72px;color:#2c2c2c;font-family:'Liberation Sans', sans-serif;">East</div>
<div class="t" style="left:872.50px;top:411.15px;font-size:22.00px;line-height:28.60px;color:#2c2c2c;font-family:'Liberation Mono', monospace;transform:scale(1.0000,1.1000);transform-origin:0 20.15px;">43.82</div>
<div class="t" style="left:1039.00px;top:411.15px;font-size:22.00px;line-height:28.60px;color:#2c2c2c;font-family:'Liberation Mono', monospace;transform:scale(1.0000,1.1000);transform-origin:0 20.15px;">-1.17</div>
<div class="t" style="left:1192.28px;top:411.15px;font-size:22.00px;line-height:28.60px;color:#2c2c2c;font-family:'Liberation Mono', monospace;transform:scale(1.0000,1.1000);transform-origin:0 20.15px;">252.00</div>
<div class="t" style="left:1385.70px;top:411.15px;font-size:22.00px;line-height:28.60px;color:#2c2c2c;font-family:'Liberation Mono', monospace;transform:scale(1.0000,1.1000);transform-origin:0 20.15px;">0.00</div>
<div class="t" style="left:1788.78px;top:411.15px;font-size:22.00px;line-height:28.60px;color:#2c2c2c;font-family:'Liberation Mono', monospace;transform:scale(1.0000,1.1000);transform-origin:0 20.15px;">109.55</div>
<div class="t" style="left:1968.00px;top:411.15px;font-size:22.00px;line-height:28.60px;color:#2c2c2c;font-family:'Liberation Mono', monospace;transform:scale(1.0000,1.1000);transform-origin:0 20.15px;">-2.92</div>
<div class="t" style="left:2366.68px;top:411.15px;font-size:22.00px;line-height:28.60px;color:#2c2c2c;font-family:'Liberation Mono', monospace;transform:scale(1.0000,1.1000);transform-origin:0 20.15px;">5/13/2025</div>
<div class="b" style="left:1495.90px;top:404.40px;width:142.80px;height:36.70px;background:#ffff00;border-radius:13.5px"></div>
<div class="t" style="left:1510.80px;top:410.48px;font-size:24.40px;line-height:31.72px;color:#222;font-family:'Liberation Sans', sans-serif;transform:scale(0.9298,1.0000);transform-origin:0 24.32px;">In Progress</div>
<div class="b" style="left:2054.00px;top:407.80px;width:29.00px;height:29.00px;border:2px solid #333;border-radius:4.5px"></div>
<div class="t" style="left:47.00px;top:445.06px;font-size:24.40px;line-height:31.72px;color:#2c2c2c;font-family:'Liberation Sans', sans-serif;">Office Supplies</div>
<div class="t" style="left:295.70px;top:445.06px;font-size:24.40px;line-height:31.72px;color:#2c2c2c;font-family:'Liberation Sans', sans-serif;">Art</div>
<div class="t" style="left:545.40px;top:445.06px;font-size:24.40px;line-height:31.72px;color:#2c2c2c;font-family:'Liberation Sans', sans-serif;">South</div>
<div class="t" style="left:885.70px;top:448.63px;font-size:22.00px;line-height:28.60px;color:#2c2c2c;font-family:'Liberation Mono', monospace;transform:scale(1.0000,1.1000);transform-origin:0 20.15px;">4.66</div>
<div class="t" style="left:1052.20px;top:448.63px;font-size:22.00px;line-height:28.60px;color:#2c2c2c;font-family:'Liberation Mono', monospace;transform:scale(1.0000,1.1000);transform-origin:0 20.15px;">1.06</div>
<div class="t" style="left:1192.28px;top:448.63px;font-size:22.00px;line-height:28.60px;color:#2c2c2c;font-family:'Liberation Mono', monospace;transform:scale(1.0000,1.1000);transform-origin:0 20.15px;">547.00</div>
<div class="t" style="left:1385.70px;top:448.63px;font-size:22.00px;line-height:28.60px;color:#2c2c2c;font-family:'Liberation Mono', monospace;transform:scale(1.0000,1.1000);transform-origin:0 20.15px;">0.00</div>
<div class="t" style="left:1802.00px;top:448.63px;font-size:22.00px;line-height:28.60px;color:#2c2c2c;font-family:'Liberation Mono', monospace;transform:scale(1.0000,1.1000);transform-origin:0 20.15px;">11.64</div>
<div class="t" style="left:1981.20px;top:448.63px;font-size:22.00px;line-height:28.60px;color:#2c2c2c;font-family:'Liberation Mono', monospace;transform:scale(1.0000,1.1000);transform-origin:0 20.15px;">2.65</div>
<div class="t" style="left:2366.68px;top:448.63px;font-size:22.00px;line-height:28.60px;color:#2c2c2c;font-family:'Liberation Mono', monospace;transform:scale(1.0000,1.1000);transform-origin:0 20.15px;">5/28/2025</div>
<div class="b" style="left:1502.90px;top:441.88px;width:128.80px;height:36.70px;background:#ff8c00;border-radius:13.5px"></div>
<div class="t" style="left:1518.40px;top:447.96px;font-size:24.40px;line-height:31.72px;color:#222;font-family:'Liberation Sans', sans-serif;transform:scale(0.9404,1.0000);transform-origin:0 24.32px;">In Review</div>
<svg class="b" style="left:2054.00px;top:445.28px" width="29.00" height="29.00" viewBox="0 0 29 29" fill="none"><rect x="0" y="0" width="29" height="29" rx="4.5" fill="#0078d4"/><polyline points="4.8,14.3 12.3,21.8 24.5,8.5" stroke="#fff" stroke-width="2.8" fill="none"/></svg>
<div class="t" style="left:47.00px;top:482.54px;font-size:24.40px;line-height:31.72px;color:#2c2c2c;font-family:'Liberation Sans', sans-serif;">Furniture</div>
<div class="t" style="left:295.70px;top:482.54px;font-size:24.40px;line-height:31.72px;color:#2c2c2c;font-family:'Liberation Sans', sans-serif;">Bookcases</div>
<div class="t" style="left:545.40px;top:482.54px;font-size:24.40px;line-height:31.72px;color:#2c2c2c;font-family:'Liberation Sans', sans-serif;">Central</div>
<div class="t" style="left:872.50px;top:486.11px;font-size:22.00px;line-height:28.60px;color:#2c2c2c;font-family:'Liberation Mono', monospace;transform:scale(1.0000,1.1000);transform-origin:0 20.15px;">24.16</div>
<div class="t" style="left:1039.00px;top:486.11px;font-size:22.00px;line-height:28.60px;color:#2c2c2c;font-family:'Liberation Mono', monospace;transform:scale(1.0000,1.1000);transform-origin:0 20.15px;">-2.00</div>
<div class="t" style="left:1192.28px;top:486.11px;font-size:22.00px;line-height:28.60px;color:#2c2c2c;font-family:'Liberation Mono', monospace;transform:scale(1.0000,1.1000);transform-origin:0 20.15px;">192.00</div>
<div class="t" style="left:1385.70px;top:486.11px;font-size:22.00px;line-height:28.60px;color:#2c2c2c;font-family:'Liberation Mono', monospace;transform:scale(1.0000,1.1000);transform-origin:0 20.15px;">0.00</div>
<div class="t" style="left:1802.00px;top:486.11px;font-size:22.00px;line-height:28.60px;color:#2c2c2c;font-family:'Liberation Mono', monospace;transform:scale(1.0000,1.1000);transform-origin:0 20.15px;">60.39</div>
<div class="t" style="left:1968.00px;top:486.11px;font-size:22.00px;line-height:28.60px;color:#2c2c2c;font-family:'Liberation Mono', monospace;transform:scale(1.0000,1.1000);transform-origin:0 20.15px;">-4.99</div>
<div class="t" style="left:2366.68px;top:486.11px;font-size:22.00px;line-height:28.60px;color:#2c2c2c;font-family:'Liberation Mono', monospace;transform:scale(1.0000,1.1000);transform-origin:0 20.15px;">6/10/2025</div>
<div class="b" style="left:1492.05px;top:479.36px;width:150.50px;height:36.70px;background:#ff0000;border-radius:13.5px"></div>
<div class="t" style="left:1507.80px;top:485.44px;font-size:24.40px;line-height:31.72px;color:#222;font-family:'Liberation Sans', sans-serif;transform:scale(0.9885,1.0000);transform-origin:0 24.32px;">Not Started</div>
<svg class="b" style="left:2054.00px;top:482.76px" width="29.00" height="29.00" viewBox="0 0 29 29" fill="none"><rect x="0" y="0" width="29" height="29" rx="4.5" fill="#0078d4"/><polyline points="4.8,14.3 12.3,21.8 24.5,8.5" stroke="#fff" stroke-width="2.8" fill="none"/></svg>
<div class="t" style="left:47.00px;top:520.02px;font-size:24.40px;line-height:31.72px;color:#2c2c2c;font-family:'Liberation Sans', sans-serif;">Furniture</div>
<div class="t" style="left:295.70px;top:520.02px;font-size:24.40px;line-height:31.72px;color:#2c2c2c;font-family:'Liberation Sans', sans-serif;">Tables</div>
<div class="t" style="left:545.40px;top:520.02px;font-size:24.40px;line-height:31.72px;color:#2c2c2c;font-family:'Liberation Sans', sans-serif;">South</div>
<div class="t" style="left:872.50px;top:523.59px;font-size:22.00px;line-height:28.60px;color:#2c2c2c;font-family:'Liberation Mono', monospace;transform:scale(1.0000,1.1000);transform-origin:0 20.15px;">43.92</div>
<div class="t" style="left:1039.00px;top:523.59px;font-size:22.00px;line-height:28.60px;color:#2c2c2c;font-family:'Liberation Mono', monospace;transform:scale(1.0000,1.1000);transform-origin:0 20.15px;">-4.62</div>
<div class="t" style="left:1192.28px;top:523.59px;font-size:22.00px;line-height:28.60px;color:#2c2c2c;font-family:'Liberation Mono', monospace;transform:scale(1.0000,1.1000);transform-origin:0 20.15px;">227.00</div>
<div class="t" style="left:1385.70px;top:523.59px;font-size:22.00px;line-height:28.60px;color:#2c2c2c;font-family:'Liberation Mono', monospace;transform:scale(1.0000,1.1000);transform-origin:0 20.15px;">0.00</div>
<div class="t" style="left:1788.78px;top:523.59px;font-size:22.00px;line-height:28.60px;color:#2c2c2c;font-family:'Liberation Mono', monospace;transform:scale(1.0000,1.1000);transform-origin:0 20.15px;">109.79</div>
<div class="t" style="left:1954.78px;top:523.59px;font-size:22.00px;line-height:28.60px;color:#2c2c2c;font-family:'Liberation Mono', monospace;transform:scale(1.0000,1.1000);transform-origin:0 20.15px;">-11.56</div>
<div class="t" style="left:2366.68px;top:523.59px;font-size:22.00px;line-height:28.60px;color:#2c2c2c;font-family:'Liberation Mono', monospace;transform:scale(1.0000,1.1000);transform-origin:0 20.15px;">6/10/2025</div>
<div class="b" style="left:1502.90px;top:516.84px;width:128.80px;height:36.70px;background:#ff8c00;border-radius:13.5px"></div>
<div class="t" style="left:1518.40px;top:522.92px;font-size:24.40px;line-height:31.72px;color:#222;font-family:'Liberation Sans', sans-serif;transform:scale(0.9404,1.0000);transform-origin:0 24.32px;">In Review</div>
<svg class="b" style="left:2054.00px;top:520.24px" width="29.00" height="29.00" viewBox="0 0 29 29" fill="none"><rect x="0" y="0" width="29" height="29" rx="4.5" fill="#0078d4"/><polyline points="4.8,14.3 12.3,21.8 24.5,8.5" stroke="#fff" stroke-width="2.8" fill="none"/></svg>
<div class="t" style="left:47.00px;top:557.50px;font-size:24.40px;line-height:31.72px;color:#2c2c2c;font-family:'Liberation Sans', sans-serif;">Office Supplies</div>
<div class="t" style="left:295.70px;top:557.50px;font-size:24.40px;line-height:31.72px;color:#2c2c2c;font-family:'Liberation Sans', sans-serif;">Binders</div>
<div class="t" style="left:545.40px;top:557.50px;font-size:24.40px;line-height:31.72px;color:#2c2c2c;font-family:'Liberation Sans', sans-serif;">Central</div>
<div class="t" style="left:872.50px;top:561.07px;font-size:22.00px;line-height:28.60px;color:#2c2c2c;font-family:'Liberation Mono', monospace;transform:scale(1.0000,1.1000);transform-origin:0 20.15px;">56.92</div>
<div class="t" style="left:1039.00px;top:561.07px;font-size:22.00px;line-height:28.60px;color:#2c2c2c;font-family:'Liberation Mono', monospace;transform:scale(1.0000,1.1000);transform-origin:0 20.15px;">-1.04</div>
<div class="t" style="left:1165.88px;top:561.07px;font-size:22.00px;line-height:28.60px;color:#2c2c2c;font-family:'Liberation Mono', monospace;transform:scale(1.0000,1.1000);transform-origin:0 20.15px;">1,473.00</div>
<div class="t" style="left:1359.28px;top:561.07px;font-size:22.00px;line-height:28.60px;color:#2c2c2c;font-family:'Liberation Mono', monospace;transform:scale(1.0000,1.1000);transform-origin:0 20.15px;">233.00</div>
<div class="t" style="left:1788.78px;top:561.07px;font-size:22.00px;line-height:28.60px;color:#2c2c2c;font-family:'Liberation Mono', monospace;transform:scale(1.0000,1.1000);transform-origin:0 20.15px;">142.31</div>
<div class="t" style="left:1968.00px;top:561.07px;font-size:22.00px;line-height:28.60px;color:#2c2c2c;font-family:'Liberation Mono', monospace;transform:scale(1.0000,1.1000);transform-origin:0 20.15px;">-2.61</div>
<div class="t" style="left:2366.68px;top:561.07px;font-size:22.00px;line-height:28.60px;color:#2c2c2c;font-family:'Liberation Mono', monospace;transform:scale(1.0000,1.1000);transform-origin:0 20.15px;">6/30/2025</div>
<div class="b" style="left:1515.35px;top:554.32px;width:103.90px;height:36.70px;background:#73b9fc;border-radius:13.5px"></div>
<div class="t" style="left:1530.40px;top:560.40px;font-size:24.40px;line-height:31.72px;color:#222;font-family:'Liberation Sans', sans-serif;transform:scale(0.9763,1.0000);transform-origin:0 24.32px;">Started</div>
<svg class="b" style="left:2054.00px;top:557.72px" width="29.00" height="29.00" viewBox="0 0 29 29" fill="none"><rect x="0" y="0" width="29" height="29" rx="4.5" fill="#0078d4"/><polyline points="4.8,14.3 12.3,21.8 24.5,8.5" stroke="#fff" stroke-width="2.8" fill="none"/></svg>
<div class="t" style="left:47.00px;top:594.98px;font-size:24.40px;line-height:31.72px;color:#2c2c2c;font-family:'Liberation Sans', sans-serif;">Furniture</div>
<div class="t" style="left:295.70px;top:594.98px;font-size:24.40px;line-height:31.72px;color:#2c2c2c;font-family:'Liberation Sans', sans-serif;">Chairs</div>
<div class="t" style="left:545.40px;top:594.98px;font-size:24.40px;line-height:31.72px;color:#2c2c2c;font-family:'Liberation Sans', sans-serif;">South</div>
<div class="t" style="left:872.50px;top:598.55px;font-size:22.00px;line-height:28.60px;color:#2c2c2c;font-family:'Liberation Mono', monospace;transform:scale(1.0000,1.1000);transform-origin:0 20.15px;">45.18</div>
<div class="t" style="left:1052.20px;top:598.55px;font-size:22.00px;line-height:28.60px;color:#2c2c2c;font-family:'Liberation Mono', monospace;transform:scale(1.0000,1.1000);transform-origin:0 20.15px;">6.61</div>
<div class="t" style="left:1192.28px;top:598.55px;font-size:22.00px;line-height:28.60px;color:#2c2c2c;font-family:'Liberation Mono', monospace;transform:scale(1.0000,1.1000);transform-origin:0 20.15px;">331.00</div>
<div class="t" style="left:1385.70px;top:598.55px;font-size:22.00px;line-height:28.60px;color:#2c2c2c;font-family:'Liberation Mono', monospace;transform:scale(1.0000,1.1000);transform-origin:0 20.15px;">0.00</div>
<div class="t" style="left:1788.78px;top:598.55px;font-size:22.00px;line-height:28.60px;color:#2c2c2c;font-family:'Liberation Mono', monospace;transform:scale(1.0000,1.1000);transform-origin:0 20.15px;">112.94</div>
<div class="t" style="left:1968.00px;top:598.55px;font-size:22.00px;line-height:28.60px;color:#2c2c2c;font-family:'Liberation Mono', monospace;transform:scale(1.0000,1.1000);transform-origin:0 20.15px;">16.53</div>
<div class="t" style="left:2379.88px;top:598.55px;font-size:22.00px;line-height:28.60px;color:#2c2c2c;font-family:'Liberation Mono', monospace;transform:scale(1.0000,1.1000);transform-origin:0 20.15px;">7/5/2025</div>
<svg class="b" style="left:2054.00px;top:595.20px" width="29.00" height="29.00" viewBox="0 0 29 29" fill="none"><rect x="0" y="0" width="29" height="29" rx="4.5" fill="#0078d4"/><polyline points="4.8,14.3 12.3,21.8 24.5,8.5" stroke="#fff" stroke-width="2.8" fill="none"/></svg>
<div class="t" style="left:47.00px;top:632.46px;font-size:24.40px;line-height:31.72px;color:#2c2c2c;font-family:'Liberation Sans', sans-serif;">Furniture</div>
<div class="t" style="left:295.70px;top:632.46px;font-size:24.40px;line-height:31.72px;color:#2c2c2c;font-family:'Liberation Sans', sans-serif;">Bookcases</div>
<div class="t" style="left:545.40px;top:632.46px;font-size:24.40px;line-height:31.72px;color:#2c2c2c;font-family:'Liberation Sans', sans-serif;">South</div>
<div class="t" style="left:872.50px;top:636.03px;font-size:22.00px;line-height:28.60px;color:#2c2c2c;font-family:'Liberation Mono', monospace;transform:scale(1.0000,1.1000);transform-origin:0 20.15px;">10.90</div>
<div class="t" style="left:1052.20px;top:636.03px;font-size:22.00px;line-height:28.60px;color:#2c2c2c;font-family:'Liberation Mono', monospace;transform:scale(1.0000,1.1000);transform-origin:0 20.15px;">1.34</div>
<div class="t" style="left:1192.28px;top:636.03px;font-size:22.00px;line-height:28.60px;color:#2c2c2c;font-family:'Liberation Mono', monospace;transform:scale(1.0000,1.1000);transform-origin:0 20.15px;">118.00</div>
<div class="t" style="left:1385.70px;top:636.03px;font-size:22.00px;line-height:28.60px;color:#2c2c2c;font-family:'Liberation Mono', monospace;transform:scale(1.0000,1.1000);transform-origin:0 20.15px;">0.00</div>
<div class="t" style="left:1802.00px;top:636.03px;font-size:22.00px;line-height:28.60px;color:#2c2c2c;font-family:'Liberation Mono', monospace;transform:scale(1.0000,1.1000);transform-origin:0 20.15px;">27.25</div>
<div class="t" style="left:1981.20px;top:636.03px;font-size:22.00px;line-height:28.60px;color:#2c2c2c;font-family:'Liberation Mono', monospace;transform:scale(1.0000,1.1000);transform-origin:0 20.15px;">3.35</div>
<div class="t" style="left:2366.68px;top:636.03px;font-size:22.00px;line-height:28.60px;color:#2c2c2c;font-family:'Liberation Mono', monospace;transform:scale(1.0000,1.1000);transform-origin:0 20.15px;">7/15/2025</div>
<div class="b" style="left:1515.35px;top:629.28px;width:103.90px;height:36.70px;background:#73b9fc;border-radius:13.5px"></div>
<div class="t" style="left:1530.40px;top:635.36px;font-size:24.40px;line-height:31.72px;color:#222;font-family:'Liberation Sans', sans-serif;transform:scale(0.9763,1.0000);transform-origin:0 24.32px;">Started</div>
<svg class="b" style="left:2054.00px;top:632.68px" width="29.00" height="29.00" viewBox="0 0 29 29" fill="none"><rect x="0" y="0" width="29" height="29" rx="4.5" fill="#0078d4"/><polyline points="4.8,14.3 12.3,21.8 24.5,8.5" stroke="#fff" stroke-width="2.8" fill="none"/></svg>
<div class="t" style="left:47.00px;top:669.94px;font-size:24.40px;line-height:31.72px;color:#2c2c2c;font-family:'Liberation Sans', sans-serif;">Furniture</div>
<div class="t" style="left:295.70px;top:669.94px;font-size:24.40px;line-height:31.72px;color:#2c2c2c;font-family:'Liberation Sans', sans-serif;">Chairs</div>
<div class="t" style="left:545.40px;top:669.94px;font-size:24.40px;line-height:31.72px;color:#2c2c2c;font-family:'Liberation Sans', sans-serif;">West</div>
<div class="t" style="left:859.28px;top:673.51px;font-size:22.00px;line-height:28.60px;color:#2c2c2c;font-family:'Liberation Mono', monospace;transform:scale(1.0000,1.1000);transform-origin:0 20.15px;">101.78</div>
<div class="t" style="left:1052.20px;top:673.51px;font-size:22.00px;line-height:28.60px;color:#2c2c2c;font-family:'Liberation Mono', monospace;transform:scale(1.0000,1.1000);transform-origin:0 20.15px;">4.03</div>
<div class="t" style="left:1192.28px;top:673.51px;font-size:22.00px;line-height:28.60px;color:#2c2c2c;font-family:'Liberation Mono', monospace;transform:scale(1.0000,1.1000);transform-origin:0 20.15px;">734.00</div>
<div class="t" style="left:1385.70px;top:673.51px;font-size:22.00px;line-height:28.60px;color:#2c2c2c;font-family:'Liberation Mono', monospace;transform:scale(1.0000,1.1000);transform-origin:0 20.15px;">0.00</div>
<div class="t" style="left:1788.78px;top:673.51px;font-size:22.00px;line-height:28.60px;color:#2c2c2c;font-family:'Liberation Mono', monospace;transform:scale(1.0000,1.1000);transform-origin:0 20.15px;">254.45</div>
<div class="t" style="left:1968.00px;top:673.51px;font-size:22.00px;line-height:28.60px;color:#2c2c2c;font-family:'Liberation Mono', monospace;transform:scale(1.0000,1.1000);transform-origin:0 20.15px;">10.07</div>
<div class="t" style="left:2366.68px;top:673.51px;font-size:22.00px;line-height:28.60px;color:#2c2c2c;font-family:'Liberation Mono', monospace;transform:scale(1.0000,1.1000);transform-origin:0 20.15px;">7/30/2025</div>
<svg class="b" style="left:2054.00px;top:670.16px" width="29.00" height="29.00" viewBox="0 0 29 29" fill="none"><rect x="0" y="0" width="29" height="29" rx="4.5" fill="#0078d4"/><polyline points="4.8,14.3 12.3,21.8 24.5,8.5" stroke="#fff" stroke-width="2.8" fill="none"/></svg>
<div class="t" style="left:47.00px;top:707.42px;font-size:24.40px;line-height:31.72px;color:#2c2c2c;font-family:'Liberation Sans', sans-serif;">Furniture</div>
<div class="t" style="left:295.70px;top:707.42px;font-size:24.40px;line-height:31.72px;color:#2c2c2c;font-family:'Liberation Sans', sans-serif;">Bookcases</div>
<div class="t" style="left:545.40px;top:707.42px;font-size:24.40px;line-height:31.72px;color:#2c2c2c;font-family:'Liberation Sans', sans-serif;">West</div>
<div class="t" style="left:872.50px;top:710.99px;font-size:22.00px;line-height:28.60px;color:#2c2c2c;font-family:'Liberation Mono', monospace;transform:scale(1.0000,1.1000);transform-origin:0 20.15px;">36.00</div>
<div class="t" style="left:1039.00px;top:710.99px;font-size:22.00px;line-height:28.60px;color:#2c2c2c;font-family:'Liberation Mono', monospace;transform:scale(1.0000,1.1000);transform-origin:0 20.15px;">-1.65</div>
<div class="t" style="left:1192.28px;top:710.99px;font-size:22.00px;line-height:28.60px;color:#2c2c2c;font-family:'Liberation Mono', monospace;transform:scale(1.0000,1.1000);transform-origin:0 20.15px;">306.00</div>
<div class="t" style="left:1372.50px;top:710.99px;font-size:22.00px;line-height:28.60px;color:#2c2c2c;font-family:'Liberation Mono', monospace;transform:scale(1.0000,1.1000);transform-origin:0 20.15px;">15.00</div>
<div class="t" style="left:1802.00px;top:710.99px;font-size:22.00px;line-height:28.60px;color:#2c2c2c;font-family:'Liberation Mono', monospace;transform:scale(1.0000,1.1000);transform-origin:0 20.15px;">90.01</div>
<div class="t" style="left:1968.00px;top:710.99px;font-size:22.00px;line-height:28.60px;color:#2c2c2c;font-family:'Liberation Mono', monospace;transform:scale(1.0000,1.1000);transform-origin:0 20.15px;">-4.12</div>
<div class="t" style="left:2379.88px;top:710.99px;font-size:22.00px;line-height:28.60px;color:#2c2c2c;font-family:'Liberation Mono', monospace;transform:scale(1.0000,1.1000);transform-origin:0 20.15px;">8/4/2025</div>
<div class="b" style="left:1502.90px;top:704.24px;width:128.80px;height:36.70px;background:#ff8c00;border-radius:13.5px"></div>
<div class="t" style="left:1518.40px;top:710.32px;font-size:24.40px;line-height:31.72px;color:#222;font-family:'Liberation Sans', sans-serif;transform:scale(0.9404,1.0000);transform-origin:0 24.32px;">In Review</div>
<svg class="b" style="left:2054.00px;top:707.64px" width="29.00" height="29.00" viewBox="0 0 29 29" fill="none"><rect x="0" y="0" width="29" height="29" rx="4.5" fill="#0078d4"/><polyline points="4.8,14.3 12.3,21.8 24.5,8.5" stroke="#fff" stroke-width="2.8" fill="none"/></svg>
<div class="t" style="left:47.00px;top:744.90px;font-size:24.40px;line-height:31.72px;color:#2c2c2c;font-family:'Liberation Sans', sans-serif;">Furniture</div>
<div class="t" style="left:295.70px;top:744.90px;font-size:24.40px;line-height:31.72px;color:#2c2c2c;font-family:'Liberation Sans', sans-serif;">Furnishings</div>
<div class="t" style="left:545.40px;top:744.90px;font-size:24.40px;line-height:31.72px;color:#2c2c2c;font-family:'Liberation Sans', sans-serif;">Central</div>
<div class="t" style="left:872.50px;top:748.47px;font-size:22.00px;line-height:28.60px;color:#2c2c2c;font-family:'Liberation Mono', monospace;transform:scale(1.0000,1.1000);transform-origin:0 20.15px;">15.25</div>
<div class="t" style="left:1039.00px;top:748.47px;font-size:22.00px;line-height:28.60px;color:#2c2c2c;font-family:'Liberation Mono', monospace;transform:scale(1.0000,1.1000);transform-origin:0 20.15px;">-3.91</div>
<div class="t" style="left:1192.28px;top:748.47px;font-size:22.00px;line-height:28.60px;color:#2c2c2c;font-family:'Liberation Mono', monospace;transform:scale(1.0000,1.1000);transform-origin:0 20.15px;">758.00</div>
<div class="t" style="left:1359.28px;top:748.47px;font-size:22.00px;line-height:28.60px;color:#2c2c2c;font-family:'Liberation Mono', monospace;transform:scale(1.0000,1.1000);transform-origin:0 20.15px;">138.00</div>
<div class="t" style="left:1802.00px;top:748.47px;font-size:22.00px;line-height:28.60px;color:#2c2c2c;font-family:'Liberation Mono', monospace;transform:scale(1.0000,1.1000);transform-origin:0 20.15px;">38.14</div>
<div class="t" style="left:1968.00px;top:748.47px;font-size:22.00px;line-height:28.60px;color:#2c2c2c;font-family:'Liberation Mono', monospace;transform:scale(1.0000,1.1000);transform-origin:0 20.15px;">-9.77</div>
<div class="t" style="left:2379.88px;top:748.47px;font-size:22.00px;line-height:28.60px;color:#2c2c2c;font-family:'Liberation Mono', monospace;transform:scale(1.0000,1.1000);transform-origin:0 20.15px;">8/4/2025</div>
<div class="b" style="left:1495.90px;top:741.72px;width:142.80px;height:36.70px;background:#ffff00;border-radius:13.5px"></div>
<div class="t" style="left:1510.80px;top:747.80px;font-size:24.40px;line-height:31.72px;color:#222;font-family:'Liberation Sans', sans-serif;transform:scale(0.9298,1.0000);transform-origin:0 24.32px;">In Progress</div>
<svg class="b" style="left:2054.00px;top:745.12px" width="29.00" height="29.00" viewBox="0 0 29 29" fill="none"><rect x="0" y="0" width="29" height="29" rx="4.5" fill="#0078d4"/><polyline points="4.8,14.3 12.3,21.8 24.5,8.5" stroke="#fff" stroke-width="2.8" fill="none"/></svg>
<div class="t" style="left:47.00px;top:782.38px;font-size:24.40px;line-height:31.72px;color:#2c2c2c;font-family:'Liberation Sans', sans-serif;">Furniture</div>
<div class="t" style="left:295.70px;top:782.38px;font-size:24.40px;line-height:31.72px;color:#2c2c2c;font-family:'Liberation Sans', sans-serif;">Furnishings</div>
<div class="t" style="left:545.40px;top:782.38px;font-size:24.40px;line-height:31.72px;color:#2c2c2c;font-family:'Liberation Sans', sans-serif;">West</div>
<div class="t" style="left:872.50px;top:785.95px;font-size:22.00px;line-height:28.60px;color:#2c2c2c;font-family:'Liberation Mono', monospace;transform:scale(1.0000,1.1000);transform-origin:0 20.15px;">30.07</div>
<div class="t" style="left:1052.20px;top:785.95px;font-size:22.00px;line-height:28.60px;color:#2c2c2c;font-family:'Liberation Mono', monospace;transform:scale(1.0000,1.1000);transform-origin:0 20.15px;">7.64</div>
<div class="t" style="left:1165.88px;top:785.95px;font-size:22.00px;line-height:28.60px;color:#2c2c2c;font-family:'Liberation Mono', monospace;transform:scale(1.0000,1.1000);transform-origin:0 20.15px;">1,175.00</div>
<div class="t" style="left:1385.70px;top:785.95px;font-size:22.00px;line-height:28.60px;color:#2c2c2c;font-family:'Liberation Mono', monospace;transform:scale(1.0000,1.1000);transform-origin:0 20.15px;">0.00</div>
<div class="t" style="left:1802.00px;top:785.95px;font-size:22.00px;line-height:28.60px;color:#2c2c2c;font-family:'Liberation Mono', monospace;transform:scale(1.0000,1.1000);transform-origin:0 20.15px;">75.18</div>
<div class="t" style="left:1968.00px;top:785.95px;font-size:22.00px;line-height:28.60px;color:#2c2c2c;font-family:'Liberation Mono', monospace;transform:scale(1.0000,1.1000);transform-origin:0 20.15px;">19.10</div>
<div class="t" style="left:2379.88px;top:785.95px;font-size:22.00px;line-height:28.60px;color:#2c2c2c;font-family:'Liberation Mono', monospace;transform:scale(1.0000,1.1000);transform-origin:0 20.15px;">8/4/2025</div>
<div class="b" style="left:1495.90px;top:779.20px;width:142.80px;height:36.70px;background:#ffff00;border-radius:13.5px"></div>
<div class="t" style="left:1510.80px;top:785.28px;font-size:24.40px;line-height:31.72px;color:#222;font-family:'Liberation Sans', sans-serif;transform:scale(0.9298,1.0000);transform-origin:0 24.32px;">In Progress</div>
<svg class="b" style="left:2054.00px;top:782.60px" width="29.00" height="29.00" viewBox="0 0 29 29" fill="none"><rect x="0" y="0" width="29" height="29" rx="4.5" fill="#0078d4"/><polyline points="4.8,14.3 12.3,21.8 24.5,8.5" stroke="#fff" stroke-width="2.8" fill="none"/></svg>
<div class="t" style="left:47.00px;top:819.86px;font-size:24.40px;line-height:31.72px;color:#2c2c2c;font-family:'Liberation Sans', sans-serif;">Office Supplies</div>
<div class="t" style="left:295.70px;top:819.86px;font-size:24.40px;line-height:31.72px;color:#2c2c2c;font-family:'Liberation Sans', sans-serif;">Appliances</div>
<div class="t" style="left:545.40px;top:819.86px;font-size:24.40px;line-height:31.72px;color:#2c2c2c;font-family:'Liberation Sans', sans-serif;">South</div>
<div class="t" style="left:872.50px;top:823.43px;font-size:22.00px;line-height:28.60px;color:#2c2c2c;font-family:'Liberation Mono', monospace;transform:scale(1.0000,1.1000);transform-origin:0 20.15px;">19.53</div>
<div class="t" style="left:1052.20px;top:823.43px;font-size:22.00px;line-height:28.60px;color:#2c2c2c;font-family:'Liberation Mono', monospace;transform:scale(1.0000,1.1000);transform-origin:0 20.15px;">4.12</div>
<div class="t" style="left:1192.28px;top:823.43px;font-size:22.00px;line-height:28.60px;color:#2c2c2c;font-family:'Liberation Mono', monospace;transform:scale(1.0000,1.1000);transform-origin:0 20.15px;">293.00</div>
<div class="t" style="left:1385.70px;top:823.43px;font-size:22.00px;line-height:28.60px;color:#2c2c2c;font-family:'Liberation Mono', monospace;transform:scale(1.0000,1.1000);transform-origin:0 20.15px;">0.00</div>
<div class="t" style="left:1802.00px;top:823.43px;font-size:22.00px;line-height:28.60px;color:#2c2c2c;font-family:'Liberation Mono', monospace;transform:scale(1.0000,1.1000);transform-origin:0 20.15px;">48.81</div>
<div class="t" style="left:1968.00px;top:823.43px;font-size:22.00px;line-height:28.60px;color:#2c2c2c;font-family:'Liberation Mono', monospace;transform:scale(1.0000,1.1000);transform-origin:0 20.15px;">10.31</div>
<div class="t" style="left:2379.88px;top:823.43px;font-size:22.00px;line-height:28.60px;color:#2c2c2c;font-family:'Liberation Mono', monospace;transform:scale(1.0000,1.1000);transform-origin:0 20.15px;">8/9/2025</div>
<div class="b" style="left:1495.90px;top:816.68px;width:142.80px;height:36.70px;background:#ffff00;border-radius:13.5px"></div>
<div class="t" style="left:1510.80px;top:822.76px;font-size:24.40px;line-height:31.72px;color:#222;font-family:'Liberation Sans', sans-serif;transform:scale(0.9298,1.0000);transform-origin:0 24.32px;">In Progress</div>
<div class="b" style="left:2054.00px;top:820.08px;width:29.00px;height:29.00px;border:2px solid #333;border-radius:4.5px"></div>
<div class="t" style="left:47.00px;top:857.34px;font-size:24.40px;line-height:31.72px;color:#2c2c2c;font-family:'Liberation Sans', sans-serif;">Furniture</div>
<div class="t" style="left:295.70px;top:857.34px;font-size:24.40px;line-height:31.72px;color:#2c2c2c;font-family:'Liberation Sans', sans-serif;">Tables</div>
<div class="t" style="left:545.40px;top:857.34px;font-size:24.40px;line-height:31.72px;color:#2c2c2c;font-family:'Liberation Sans', sans-serif;">Central</div>
<div class="t" style="left:872.50px;top:860.91px;font-size:22.00px;line-height:28.60px;color:#2c2c2c;font-family:'Liberation Mono', monospace;transform:scale(1.0000,1.1000);transform-origin:0 20.15px;">39.15</div>
<div class="t" style="left:1039.00px;top:860.91px;font-size:22.00px;line-height:28.60px;color:#2c2c2c;font-family:'Liberation Mono', monospace;transform:scale(1.0000,1.1000);transform-origin:0 20.15px;">-3.56</div>
<div class="t" style="left:1192.28px;top:860.91px;font-size:22.00px;line-height:28.60px;color:#2c2c2c;font-family:'Liberation Mono', monospace;transform:scale(1.0000,1.1000);transform-origin:0 20.15px;">262.00</div>
<div class="t" style="left:1385.70px;top:860.91px;font-size:22.00px;line-height:28.60px;color:#2c2c2c;font-family:'Liberation Mono', monospace;transform:scale(1.0000,1.1000);transform-origin:0 20.15px;">0.00</div>
<div class="t" style="left:1802.00px;top:860.91px;font-size:22.00px;line-height:28.60px;color:#2c2c2c;font-family:'Liberation Mono', monospace;transform:scale(1.0000,1.1000);transform-origin:0 20.15px;">97.89</div>
<div class="t" style="left:1968.00px;top:860.91px;font-size:22.00px;line-height:28.60px;color:#2c2c2c;font-family:'Liberation Mono', monospace;transform:scale(1.0000,1.1000);transform-origin:0 20.15px;">-8.90</div>
<div class="t" style="left:2366.68px;top:860.91px;font-size:22.00px;line-height:28.60px;color:#2c2c2c;font-family:'Liberation Mono', monospace;transform:scale(1.0000,1.1000);transform-origin:0 20.15px;">8/10/2025</div>
<div class="b" style="left:1494.35px;top:854.16px;width:145.90px;height:36.70px;background:#9cd53c;border-radius:13.5px"></div>
<div class="t" style="left:1509.50px;top:860.24px;font-size:24.40px;line-height:31.72px;color:#222;font-family:'Liberation Sans', sans-serif;transform:scale(1.0051,1.0000);transform-origin:0 24.32px;">Completed</div>
<div class="b" style="left:2054.00px;top:857.56px;width:29.00px;height:29.00px;border:2px solid #333;border-radius:4.5px"></div>
<div class="t" style="left:47.00px;top:894.82px;font-size:24.40px;line-height:31.72px;color:#2c2c2c;font-family:'Liberation Sans', sans-serif;">Furniture</div>
<div class="t" style="left:295.70px;top:894.82px;font-size:24.40px;line-height:31.72px;color:#2c2c2c;font-family:'Liberation Sans', sans-serif;">Furnishings</div>
<div class="t" style="left:545.40px;top:894.82px;font-size:24.40px;line-height:31.72px;color:#2c2c2c;font-family:'Liberation Sans', sans-serif;">East</div>
<div class="t" style="left:872.50px;top:898.39px;font-size:22.00px;line-height:28.60px;color:#2c2c2c;font-family:'Liberation Mono', monospace;transform:scale(1.0000,1.1000);transform-origin:0 20.15px;">29.07</div>
<div class="t" style="left:1052.20px;top:898.39px;font-size:22.00px;line-height:28.60px;color:#2c2c2c;font-family:'Liberation Mono', monospace;transform:scale(1.0000,1.1000);transform-origin:0 20.15px;">5.88</div>
<div class="t" style="left:1165.88px;top:898.39px;font-size:22.00px;line-height:28.60px;color:#2c2c2c;font-family:'Liberation Mono', monospace;transform:scale(1.0000,1.1000);transform-origin:0 20.15px;">1,015.00</div>
<div class="t" style="left:1385.70px;top:898.39px;font-size:22.00px;line-height:28.60px;color:#2c2c2c;font-family:'Liberation Mono', monospace;transform:scale(1.0000,1.1000);transform-origin:0 20.15px;">0.00</div>
<div class="t" style="left:1802.00px;top:898.39px;font-size:22.00px;line-height:28.60px;color:#2c2c2c;font-family:'Liberation Mono', monospace;transform:scale(1.0000,1.1000);transform-origin:0 20.15px;">72.68</div>
<div class="t" style="left:1968.00px;top:898.39px;font-size:22.00px;line-height:28.60px;color:#2c2c2c;font-family:'Liberation Mono', monospace;transform:scale(1.0000,1.1000);transform-origin:0 20.15px;">14.70</div>
<div class="t" style="left:2379.88px;top:898.39px;font-size:22.00px;line-height:28.60px;color:#2c2c2c;font-family:'Liberation Mono', monospace;transform:scale(1.0000,1.1000);transform-origin:0 20.15px;">9/1/2025</div>
<div class="b" style="left:1492.05px;top:891.64px;width:150.50px;height:36.70px;background:#ff0000;border-radius:13.5px"></div>
<div class="t" style="left:1507.80px;top:897.72px;font-size:24.40px;line-height:31.72px;color:#222;font-family:'Liberation Sans', sans-serif;transform:scale(0.9885,1.0000);transform-origin:0 24.32px;">Not Started</div>
<svg class="b" style="left:2054.00px;top:895.04px" width="29.00" height="29.00" viewBox="0 0 29 29" fill="none"><rect x="0" y="0" width="29" height="29" rx="4.5" fill="#0078d4"/><polyline points="4.8,14.3 12.3,21.8 24.5,8.5" stroke="#fff" stroke-width="2.8" fill="none"/></svg>
<div class="t" style="left:47.00px;top:932.30px;font-size:24.40px;line-height:31.72px;color:#2c2c2c;font-family:'Liberation Sans', sans-serif;">Furniture</div>
<div class="t" style="left:295.70px;top:932.30px;font-size:24.40px;line-height:31.72px;color:#2c2c2c;font-family:'Liberation Sans', sans-serif;">Chairs</div>
<div class="t" style="left:545.40px;top:932.30px;font-size:24.40px;line-height:31.72px;color:#2c2c2c;font-family:'Liberation Sans', sans-serif;">Central</div>
<div class="t" style="left:872.50px;top:935.87px;font-size:22.00px;line-height:28.60px;color:#2c2c2c;font-family:'Liberation Mono', monospace;transform:scale(1.0000,1.1000);transform-origin:0 20.15px;">85.23</div>
<div class="t" style="left:1052.20px;top:935.87px;font-size:22.00px;line-height:28.60px;color:#2c2c2c;font-family:'Liberation Mono', monospace;transform:scale(1.0000,1.1000);transform-origin:0 20.15px;">6.59</div>
<div class="t" style="left:1192.28px;top:935.87px;font-size:22.00px;line-height:28.60px;color:#2c2c2c;font-family:'Liberation Mono', monospace;transform:scale(1.0000,1.1000);transform-origin:0 20.15px;">615.00</div>
<div class="t" style="left:1385.70px;top:935.87px;font-size:22.00px;line-height:28.60px;color:#2c2c2c;font-family:'Liberation Mono', monospace;transform:scale(1.0000,1.1000);transform-origin:0 20.15px;">0.00</div>
<div class="t" style="left:1788.78px;top:935.87px;font-size:22.00px;line-height:28.60px;color:#2c2c2c;font-family:'Liberation Mono', monospace;transform:scale(1.0000,1.1000);transform-origin:0 20.15px;">213.08</div>
<div class="t" style="left:1968.00px;top:935.87px;font-size:22.00px;line-height:28.60px;color:#2c2c2c;font-family:'Liberation Mono', monospace;transform:scale(1.0000,1.1000);transform-origin:0 20.15px;">16.48</div>
<div class="b" style="left:1502.90px;top:929.12px;width:128.80px;height:36.70px;background:#ff8c00;border-radius:13.5px"></div>
<div class="t" style="left:1518.40px;top:935.20px;font-size:24.40px;line-height:31.72px;color:#222;font-family:'Liberation Sans', sans-serif;transform:scale(0.9404,1.0000);transform-origin:0 24.32px;">In Review</div>
<div class="b" style="left:2054.00px;top:932.52px;width:29.00px;height:29.00px;border:2px solid #333;border-radius:4.5px"></div>
<div class="t" style="left:47.00px;top:969.78px;font-size:24.40px;line-height:31.72px;color:#2c2c2c;font-family:'Liberation Sans', sans-serif;">Furniture</div>
<div class="t" style="left:295.70px;top:969.78px;font-size:24.40px;line-height:31.72px;color:#2c2c2c;font-family:'Liberation Sans', sans-serif;">Chairs</div>
<div class="t" style="left:545.40px;top:969.78px;font-size:24.40px;line-height:31.72px;color:#2c2c2c;font-family:'Liberation Sans', sans-serif;">East</div>
<div class="t" style="left:872.50px;top:973.35px;font-size:22.00px;line-height:28.60px;color:#2c2c2c;font-family:'Liberation Mono', monospace;transform:scale(1.0000,1.1000);transform-origin:0 20.15px;">96.26</div>
<div class="t" style="left:1052.20px;top:973.35px;font-size:22.00px;line-height:28.60px;color:#2c2c2c;font-family:'Liberation Mono', monospace;transform:scale(1.0000,1.1000);transform-origin:0 20.15px;">9.36</div>
<div class="t" style="left:1192.28px;top:973.35px;font-size:22.00px;line-height:28.60px;color:#2c2c2c;font-family:'Liberation Mono', monospace;transform:scale(1.0000,1.1000);transform-origin:0 20.15px;">676.00</div>
<div class="t" style="left:1385.70px;top:973.35px;font-size:22.00px;line-height:28.60px;color:#2c2c2c;font-family:'Liberation Mono', monospace;transform:scale(1.0000,1.1000);transform-origin:0 20.15px;">0.00</div>
<div class="t" style="left:1788.78px;top:973.35px;font-size:22.00px;line-height:28.60px;color:#2c2c2c;font-family:'Liberation Mono', monospace;transform:scale(1.0000,1.1000);transform-origin:0 20.15px;">240.65</div>
<div class="t" style="left:1968.00px;top:973.35px;font-size:22.00px;line-height:28.60px;color:#2c2c2c;font-family:'Liberation Mono', monospace;transform:scale(1.0000,1.1000);transform-origin:0 20.15px;">23.39</div>
<div class="b" style="left:1515.35px;top:966.60px;width:103.90px;height:36.70px;background:#73b9fc;border-radius:13.5px"></div>
<div class="t" style="left:1530.40px;top:972.68px;font-size:24.40px;line-height:31.72px;color:#222;font-family:'Liberation Sans', sans-serif;transform:scale(0.9763,1.0000);transform-origin:0 24.32px;">Started</div>
<div class="b" style="left:2054.00px;top:970.00px;width:29.00px;height:29.00px;border:2px solid #333;border-radius:4.5px"></div>
<div class="t" style="left:47.00px;top:1007.26px;font-size:24.40px;line-height:31.72px;color:#2c2c2c;font-family:'Liberation Sans', sans-serif;">Furniture</div>
<div class="t" style="left:295.70px;top:1007.26px;font-size:24.40px;line-height:31.72px;color:#2c2c2c;font-family:'Liberation Sans', sans-serif;">Furnishings</div>
<div class="t" style="left:545.40px;top:1007.26px;font-size:24.40px;line-height:31.72px;color:#2c2c2c;font-family:'Liberation Sans', sans-serif;">South</div>
<div class="t" style="left:872.50px;top:1010.83px;font-size:22.00px;line-height:28.60px;color:#2c2c2c;font-family:'Liberation Mono', monospace;transform:scale(1.0000,1.1000);transform-origin:0 20.15px;">17.31</div>
<div class="t" style="left:1052.20px;top:1010.83px;font-size:22.00px;line-height:28.60px;color:#2c2c2c;font-family:'Liberation Mono', monospace;transform:scale(1.0000,1.1000);transform-origin:0 20.15px;">3.44</div>
<div class="t" style="left:1192.28px;top:1010.83px;font-size:22.00px;line-height:28.60px;color:#2c2c2c;font-family:'Liberation Mono', monospace;transform:scale(1.0000,1.1000);transform-origin:0 20.15px;">615.00</div>
<div class="t" style="left:1385.70px;top:1010.83px;font-size:22.00px;line-height:28.60px;color:#2c2c2c;font-family:'Liberation Mono', monospace;transform:scale(1.0000,1.1000);transform-origin:0 20.15px;">0.00</div>
<div class="t" style="left:1802.00px;top:1010.83px;font-size:22.00px;line-height:28.60px;color:#2c2c2c;font-family:'Liberation Mono', monospace;transform:scale(1.0000,1.1000);transform-origin:0 20.15px;">43.27</div>
<div class="t" style="left:1981.20px;top:1010.83px;font-size:22.00px;line-height:28.60px;color:#2c2c2c;font-family:'Liberation Mono', monospace;transform:scale(1.0000,1.1000);transform-origin:0 20.15px;">8.61</div>
<div class="b" style="left:2054.00px;top:1007.48px;width:29.00px;height:29.00px;border:2px solid #333;border-radius:4.5px"></div>
<div class="t" style="left:47.00px;top:1044.74px;font-size:24.40px;line-height:31.72px;color:#2c2c2c;font-family:'Liberation Sans', sans-serif;">Furniture</div>
<div class="t" style="left:295.70px;top:1044.74px;font-size:24.40px;line-height:31.72px;color:#2c2c2c;font-family:'Liberation Sans', sans-serif;">Tables</div>
<div class="t" style="left:545.40px;top:1044.74px;font-size:24.40px;line-height:31.72px;color:#2c2c2c;font-family:'Liberation Sans', sans-serif;">East</div>
<div class="t" style="left:872.50px;top:1048.31px;font-size:22.00px;line-height:28.60px;color:#2c2c2c;font-family:'Liberation Mono', monospace;transform:scale(1.0000,1.1000);transform-origin:0 20.15px;">39.14</div>
<div class="t" style="left:1025.78px;top:1048.31px;font-size:22.00px;line-height:28.60px;color:#2c2c2c;font-family:'Liberation Mono', monospace;transform:scale(1.0000,1.1000);transform-origin:0 20.15px;">-11.03</div>
<div class="t" style="left:1192.28px;top:1048.31px;font-size:22.00px;line-height:28.60px;color:#2c2c2c;font-family:'Liberation Mono', monospace;transform:scale(1.0000,1.1000);transform-origin:0 20.15px;">271.00</div>
<div class="t" style="left:1385.70px;top:1048.31px;font-size:22.00px;line-height:28.60px;color:#2c2c2c;font-family:'Liberation Mono', monospace;transform:scale(1.0000,1.1000);transform-origin:0 20.15px;">0.00</div>
<div class="t" style="left:1802.00px;top:1048.31px;font-size:22.00px;line-height:28.60px;color:#2c2c2c;font-family:'Liberation Mono', monospace;transform:scale(1.0000,1.1000);transform-origin:0 20.15px;">97.85</div>
<div class="t" style="left:1954.78px;top:1048.31px;font-size:22.00px;line-height:28.60px;color:#2c2c2c;font-family:'Liberation Mono', monospace;transform:scale(1.0000,1.1000);transform-origin:0 20.15px;">-27.56</div>
<div class="b" style="left:2054.00px;top:1044.96px;width:29.00px;height:29.00px;border:2px solid #333;border-radius:4.5px"></div>
<div class="t" style="left:47.00px;top:1082.22px;font-size:24.40px;line-height:31.72px;color:#2c2c2c;font-family:'Liberation Sans', sans-serif;">Furniture</div>
<div class="t" style="left:295.70px;top:1082.22px;font-size:24.40px;line-height:31.72px;color:#2c2c2c;font-family:'Liberation Sans', sans-serif;">Tables</div>
<div class="t" style="left:545.40px;top:1082.22px;font-size:24.40px;line-height:31.72px;color:#2c2c2c;font-family:'Liberation Sans', sans-serif;">West</div>
<div class="t" style="left:872.50px;top:1085.79px;font-size:22.00px;line-height:28.60px;color:#2c2c2c;font-family:'Liberation Mono', monospace;transform:scale(1.0000,1.1000);transform-origin:0 20.15px;">84.75</div>
<div class="t" style="left:1052.20px;top:1085.79px;font-size:22.00px;line-height:28.60px;color:#2c2c2c;font-family:'Liberation Mono', monospace;transform:scale(1.0000,1.1000);transform-origin:0 20.15px;">1.48</div>
<div class="t" style="left:1192.28px;top:1085.79px;font-size:22.00px;line-height:28.60px;color:#2c2c2c;font-family:'Liberation Mono', monospace;transform:scale(1.0000,1.1000);transform-origin:0 20.15px;">481.00</div>
<div class="t" style="left:1385.70px;top:1085.79px;font-size:22.00px;line-height:28.60px;color:#2c2c2c;font-family:'Liberation Mono', monospace;transform:scale(1.0000,1.1000);transform-origin:0 20.15px;">0.00</div>
<div class="t" style="left:1788.78px;top:1085.79px;font-size:22.00px;line-height:28.60px;color:#2c2c2c;font-family:'Liberation Mono', monospace;transform:scale(1.0000,1.1000);transform-origin:0 20.15px;">211.89</div>
<div class="t" style="left:1981.20px;top:1085.79px;font-size:22.00px;line-height:28.60px;color:#2c2c2c;font-family:'Liberation Mono', monospace;transform:scale(1.0000,1.1000);transform-origin:0 20.15px;">3.71</div>
<div class="b" style="left:1515.35px;top:1079.04px;width:103.90px;height:36.70px;background:#73b9fc;border-radius:13.5px"></div>
<div class="t" style="left:1530.40px;top:1085.12px;font-size:24.40px;line-height:31.72px;color:#222;font-family:'Liberation Sans', sans-serif;transform:scale(0.9763,1.0000);transform-origin:0 24.32px;">Started</div>
<div class="b" style="left:2054.00px;top:1082.44px;width:29.00px;height:29.00px;border:2px solid #333;border-radius:4.5px"></div>
<div class="t" style="left:47.00px;top:1119.70px;font-size:24.40px;line-height:31.72px;color:#2c2c2c;font-family:'Liberation Sans', sans-serif;">Office Supplies</div>
<div class="t" style="left:295.70px;top:1119.70px;font-size:24.40px;line-height:31.72px;color:#2c2c2c;font-family:'Liberation Sans', sans-serif;">Appliances</div>
<div class="t" style="left:545.40px;top:1119.70px;font-size:24.40px;line-height:31.72px;color:#2c2c2c;font-family:'Liberation Sans', sans-serif;">Central</div>
<div class="t" style="left:872.50px;top:1123.27px;font-size:22.00px;line-height:28.60px;color:#2c2c2c;font-family:'Liberation Mono', monospace;transform:scale(1.0000,1.1000);transform-origin:0 20.15px;">23.58</div>
<div class="t" style="left:1039.00px;top:1123.27px;font-size:22.00px;line-height:28.60px;color:#2c2c2c;font-family:'Liberation Mono', monospace;transform:scale(1.0000,1.1000);transform-origin:0 20.15px;">-2.64</div>
<div class="t" style="left:1192.28px;top:1123.27px;font-size:22.00px;line-height:28.60px;color:#2c2c2c;font-family:'Liberation Mono', monospace;transform:scale(1.0000,1.1000);transform-origin:0 20.15px;">470.00</div>
<div class="t" style="left:1372.50px;top:1123.27px;font-size:22.00px;line-height:28.60px;color:#2c2c2c;font-family:'Liberation Mono', monospace;transform:scale(1.0000,1.1000);transform-origin:0 20.15px;">67.00</div>
<div class="t" style="left:1802.00px;top:1123.27px;font-size:22.00px;line-height:28.60px;color:#2c2c2c;font-family:'Liberation Mono', monospace;transform:scale(1.0000,1.1000);transform-origin:0 20.15px;">58.96</div>
<div class="t" style="left:1968.00px;top:1123.27px;font-size:22.00px;line-height:28.60px;color:#2c2c2c;font-family:'Liberation Mono', monospace;transform:scale(1.0000,1.1000);transform-origin:0 20.15px;">-6.60</div>
<div class="b" style="left:1492.05px;top:1116.52px;width:150.50px;height:36.70px;background:#ff0000;border-radius:13.5px"></div>
<div class="t" style="left:1507.80px;top:1122.60px;font-size:24.40px;line-height:31.72px;color:#222;font-family:'Liberation Sans', sans-serif;transform:scale(0.9885,1.0000);transform-origin:0 24.32px;">Not Started</div>
<div class="b" style="left:2054.00px;top:1119.92px;width:29.00px;height:29.00px;border:2px solid #333;border-radius:4.5px"></div>
<div class="t" style="left:47.00px;top:1157.18px;font-size:24.40px;line-height:31.72px;color:#2c2c2c;font-family:'Liberation Sans', sans-serif;">Office Supplies</div>
<div class="t" style="left:295.70px;top:1157.18px;font-size:24.40px;line-height:31.72px;color:#2c2c2c;font-family:'Liberation Sans', sans-serif;">Appliances</div>
<div class="t" style="left:545.40px;top:1157.18px;font-size:24.40px;line-height:31.72px;color:#2c2c2c;font-family:'Liberation Sans', sans-serif;">East</div>
<div class="t" style="left:872.50px;top:1160.75px;font-size:22.00px;line-height:28.60px;color:#2c2c2c;font-family:'Liberation Mono', monospace;transform:scale(1.0000,1.1000);transform-origin:0 20.15px;">34.19</div>
<div class="t" style="left:1052.20px;top:1160.75px;font-size:22.00px;line-height:28.60px;color:#2c2c2c;font-family:'Liberation Mono', monospace;transform:scale(1.0000,1.1000);transform-origin:0 20.15px;">8.39</div>
<div class="t" style="left:1192.28px;top:1160.75px;font-size:22.00px;line-height:28.60px;color:#2c2c2c;font-family:'Liberation Mono', monospace;transform:scale(1.0000,1.1000);transform-origin:0 20.15px;">474.00</div>
<div class="t" style="left:1385.70px;top:1160.75px;font-size:22.00px;line-height:28.60px;color:#2c2c2c;font-family:'Liberation Mono', monospace;transform:scale(1.0000,1.1000);transform-origin:0 20.15px;">0.00</div>
<div class="t" style="left:1802.00px;top:1160.75px;font-size:22.00px;line-height:28.60px;color:#2c2c2c;font-family:'Liberation Mono', monospace;transform:scale(1.0000,1.1000);transform-origin:0 20.15px;">85.47</div>
<div class="t" style="left:1968.00px;top:1160.75px;font-size:22.00px;line-height:28.60px;color:#2c2c2c;font-family:'Liberation Mono', monospace;transform:scale(1.0000,1.1000);transform-origin:0 20.15px;">20.98</div>
<div class="b" style="left:1515.35px;top:1154.00px;width:103.90px;height:36.70px;background:#73b9fc;border-radius:13.5px"></div>
<div class="t" style="left:1530.40px;top:1160.08px;font-size:24.40px;line-height:31.72px;color:#222;font-family:'Liberation Sans', sans-serif;transform:scale(0.9763,1.0000);transform-origin:0 24.32px;">Started</div>
<div class="b" style="left:2054.00px;top:1157.40px;width:29.00px;height:29.00px;border:2px solid #333;border-radius:4.5px"></div>
<div class="t" style="left:47.00px;top:1194.66px;font-size:24.40px;line-height:31.72px;color:#2c2c2c;font-family:'Liberation Sans', sans-serif;">Office Supplies</div>
<div class="t" style="left:295.70px;top:1194.66px;font-size:24.40px;line-height:31.72px;color:#2c2c2c;font-family:'Liberation Sans', sans-serif;">Appliances</div>
<div class="t" style="left:545.40px;top:1194.66px;font-size:24.40px;line-height:31.72px;color:#2c2c2c;font-family:'Liberation Sans', sans-serif;">West</div>
<div class="t" style="left:872.50px;top:1198.23px;font-size:22.00px;line-height:28.60px;color:#2c2c2c;font-family:'Liberation Mono', monospace;transform:scale(1.0000,1.1000);transform-origin:0 20.15px;">30.24</div>
<div class="t" style="left:1052.20px;top:1198.23px;font-size:22.00px;line-height:28.60px;color:#2c2c2c;font-family:'Liberation Mono', monospace;transform:scale(1.0000,1.1000);transform-origin:0 20.15px;">8.26</div>
<div class="t" style="left:1192.28px;top:1198.23px;font-size:22.00px;line-height:28.60px;color:#2c2c2c;font-family:'Liberation Mono', monospace;transform:scale(1.0000,1.1000);transform-origin:0 20.15px;">492.00</div>
<div class="t" style="left:1385.70px;top:1198.23px;font-size:22.00px;line-height:28.60px;color:#2c2c2c;font-family:'Liberation Mono', monospace;transform:scale(1.0000,1.1000);transform-origin:0 20.15px;">0.00</div>
<div class="t" style="left:1802.00px;top:1198.23px;font-size:22.00px;line-height:28.60px;color:#2c2c2c;font-family:'Liberation Mono', monospace;transform:scale(1.0000,1.1000);transform-origin:0 20.15px;">75.59</div>
<div class="t" style="left:1968.00px;top:1198.23px;font-size:22.00px;line-height:28.60px;color:#2c2c2c;font-family:'Liberation Mono', monospace;transform:scale(1.0000,1.1000);transform-origin:0 20.15px;">20.65</div>
<div class="b" style="left:1492.05px;top:1191.48px;width:150.50px;height:36.70px;background:#ff0000;border-radius:13.5px"></div>
<div class="t" style="left:1507.80px;top:1197.56px;font-size:24.40px;line-height:31.72px;color:#222;font-family:'Liberation Sans', sans-serif;transform:scale(0.9885,1.0000);transform-origin:0 24.32px;">Not Started</div>
<svg class="b" style="left:2054.00px;top:1194.88px" width="29.00" height="29.00" viewBox="0 0 29 29" fill="none"><rect x="0" y="0" width="29" height="29" rx="4.5" fill="#0078d4"/><polyline points="4.8,14.3 12.3,21.8 24.5,8.5" stroke="#fff" stroke-width="2.8" fill="none"/></svg>
<div class="t" style="left:47.00px;top:1232.14px;font-size:24.40px;line-height:31.72px;color:#2c2c2c;font-family:'Liberation Sans', sans-serif;">Office Supplies</div>
<div class="t" style="left:295.70px;top:1232.14px;font-size:24.40px;line-height:31.72px;color:#2c2c2c;font-family:'Liberation Sans', sans-serif;">Art</div>
<div class="t" style="left:545.40px;top:1232.14px;font-size:24.40px;line-height:31.72px;color:#2c2c2c;font-family:'Liberation Sans', sans-serif;">Central</div>
<div class="t" style="left:885.70px;top:1235.71px;font-size:22.00px;line-height:28.60px;color:#2c2c2c;font-family:'Liberation Mono', monospace;transform:scale(1.0000,1.1000);transform-origin:0 20.15px;">5.77</div>
<div class="t" style="left:1052.20px;top:1235.71px;font-size:22.00px;line-height:28.60px;color:#2c2c2c;font-family:'Liberation Mono', monospace;transform:scale(1.0000,1.1000);transform-origin:0 20.15px;">1.20</div>
<div class="t" style="left:1192.28px;top:1235.71px;font-size:22.00px;line-height:28.60px;color:#2c2c2c;font-family:'Liberation Mono', monospace;transform:scale(1.0000,1.1000);transform-origin:0 20.15px;">678.00</div>
<div class="t" style="left:1385.70px;top:1235.71px;font-size:22.00px;line-height:28.60px;color:#2c2c2c;font-family:'Liberation Mono', monospace;transform:scale(1.0000,1.1000);transform-origin:0 20.15px;">0.00</div>
<div class="t" style="left:1802.00px;top:1235.71px;font-size:22.00px;line-height:28.60px;color:#2c2c2c;font-family:'Liberation Mono', monospace;transform:scale(1.0000,1.1000);transform-origin:0 20.15px;">14.41</div>
<div class="t" style="left:1981.20px;top:1235.71px;font-size:22.00px;line-height:28.60px;color:#2c2c2c;font-family:'Liberation Mono', monospace;transform:scale(1.0000,1.1000);transform-origin:0 20.15px;">2.99</div>
<div class="b" style="left:2054.00px;top:1232.36px;width:29.00px;height:29.00px;border:2px solid #333;border-radius:4.5px"></div>
<div class="t" style="left:47.00px;top:1269.62px;font-size:24.40px;line-height:31.72px;color:#2c2c2c;font-family:'Liberation Sans', sans-serif;">Office Supplies</div>
<div class="t" style="left:295.70px;top:1269.62px;font-size:24.40px;line-height:31.72px;color:#2c2c2c;font-family:'Liberation Sans', sans-serif;">Art</div>
<div class="t" style="left:545.40px;top:1269.62px;font-size:24.40px;line-height:31.72px;color:#2c2c2c;font-family:'Liberation Sans', sans-serif;">East</div>
<div class="t" style="left:885.70px;top:1273.19px;font-size:22.00px;line-height:28.60px;color:#2c2c2c;font-family:'Liberation Mono', monospace;transform:scale(1.0000,1.1000);transform-origin:0 20.15px;">7.37</div>
<div class="t" style="left:1052.20px;top:1273.19px;font-size:22.00px;line-height:28.60px;color:#2c2c2c;font-family:'Liberation Mono', monospace;transform:scale(1.0000,1.1000);transform-origin:0 20.15px;">1.89</div>
<div class="t" style="left:1192.28px;top:1273.19px;font-size:22.00px;line-height:28.60px;color:#2c2c2c;font-family:'Liberation Mono', monospace;transform:scale(1.0000,1.1000);transform-origin:0 20.15px;">842.00</div>
<div class="t" style="left:1385.70px;top:1273.19px;font-size:22.00px;line-height:28.60px;color:#2c2c2c;font-family:'Liberation Mono', monospace;transform:scale(1.0000,1.1000);transform-origin:0 20.15px;">0.00</div>
<div class="t" style="left:1802.00px;top:1273.19px;font-size:22.00px;line-height:28.60px;color:#2c2c2c;font-family:'Liberation Mono', monospace;transform:scale(1.0000,1.1000);transform-origin:0 20.15px;">18.44</div>
<div class="t" style="left:1981.20px;top:1273.19px;font-size:22.00px;line-height:28.60px;color:#2c2c2c;font-family:'Liberation Mono', monospace;transform:scale(1.0000,1.1000);transform-origin:0 20.15px;">4.73</div>
<div class="b" style="left:2054.00px;top:1269.84px;width:29.00px;height:29.00px;border:2px solid #333;border-radius:4.5px"></div>
<div class="t" style="left:47.00px;top:1307.10px;font-size:24.40px;line-height:31.72px;color:#2c2c2c;font-family:'Liberation Sans', sans-serif;">Office Supplies</div>
<div class="t" style="left:295.70px;top:1307.10px;font-size:24.40px;line-height:31.72px;color:#2c2c2c;font-family:'Liberation Sans', sans-serif;">Art</div>
<div class="t" style="left:545.40px;top:1307.10px;font-size:24.40px;line-height:31.72px;color:#2c2c2c;font-family:'Liberation Sans', sans-serif;">West</div>
<div class="t" style="left:885.70px;top:1310.67px;font-size:22.00px;line-height:28.60px;color:#2c2c2c;font-family:'Liberation Mono', monospace;transform:scale(1.0000,1.1000);transform-origin:0 20.15px;">9.21</div>
<div class="t" style="left:1052.20px;top:1310.67px;font-size:22.00px;line-height:28.60px;color:#2c2c2c;font-family:'Liberation Mono', monospace;transform:scale(1.0000,1.1000);transform-origin:0 20.15px;">2.37</div>
<div class="t" style="left:1192.28px;top:1310.67px;font-size:22.00px;line-height:28.60px;color:#2c2c2c;font-family:'Liberation Mono', monospace;transform:scale(1.0000,1.1000);transform-origin:0 20.15px;">926.00</div>
<div class="t" style="left:1385.70px;top:1310.67px;font-size:22.00px;line-height:28.60px;color:#2c2c2c;font-family:'Liberation Mono', monospace;transform:scale(1.0000,1.1000);transform-origin:0 20.15px;">0.00</div>
<div class="t" style="left:1802.00px;top:1310.67px;font-size:22.00px;line-height:28.60px;color:#2c2c2c;font-family:'Liberation Mono', monospace;transform:scale(1.0000,1.1000);transform-origin:0 20.15px;">23.03</div>
<div class="t" style="left:1981.20px;top:1310.67px;font-size:22.00px;line-height:28.60px;color:#2c2c2c;font-family:'Liberation Mono', monospace;transform:scale(1.0000,1.1000);transform-origin:0 20.15px;">5.94</div>
<svg class="b" style="left:2054.00px;top:1307.32px" width="29.00" height="29.00" viewBox="0 0 29 29" fill="none"><rect x="0" y="0" width="29" height="29" rx="4.5" fill="#0078d4"/><polyline points="4.8,14.3 12.3,21.8 24.5,8.5" stroke="#fff" stroke-width="2.8" fill="none"/></svg>
<div class="t" style="left:47.00px;top:1344.58px;font-size:24.40px;line-height:31.72px;color:#2c2c2c;font-family:'Liberation Sans', sans-serif;">Office Supplies</div>
<div class="t" style="left:295.70px;top:1344.58px;font-size:24.40px;line-height:31.72px;color:#2c2c2c;font-family:'Liberation Sans', sans-serif;">Binders</div>
<div class="t" style="left:545.40px;top:1344.58px;font-size:24.40px;line-height:31.72px;color:#2c2c2c;font-family:'Liberation Sans', sans-serif;">East</div>
<div class="t" style="left:872.50px;top:1348.15px;font-size:22.00px;line-height:28.60px;color:#2c2c2c;font-family:'Liberation Mono', monospace;transform:scale(1.0000,1.1000);transform-origin:0 20.15px;">53.50</div>
<div class="t" style="left:1039.00px;top:1348.15px;font-size:22.00px;line-height:28.60px;color:#2c2c2c;font-family:'Liberation Mono', monospace;transform:scale(1.0000,1.1000);transform-origin:0 20.15px;">11.27</div>
<div class="t" style="left:1165.88px;top:1348.15px;font-size:22.00px;line-height:28.60px;color:#2c2c2c;font-family:'Liberation Mono', monospace;transform:scale(1.0000,1.1000);transform-origin:0 20.15px;">1,652.00</div>
<div class="t" style="left:1359.28px;top:1348.15px;font-size:22.00px;line-height:28.60px;color:#2c2c2c;font-family:'Liberation Mono', monospace;transform:scale(1.0000,1.1000);transform-origin:0 20.15px;">171.00</div>
<div class="t" style="left:1788.78px;top:1348.15px;font-size:22.00px;line-height:28.60px;color:#2c2c2c;font-family:'Liberation Mono', monospace;transform:scale(1.0000,1.1000);transform-origin:0 20.15px;">133.74</div>
<div class="t" style="left:1968.00px;top:1348.15px;font-size:22.00px;line-height:28.60px;color:#2c2c2c;font-family:'Liberation Mono', monospace;transform:scale(1.0000,1.1000);transform-origin:0 20.15px;">28.17</div>
<div class="b" style="left:1494.35px;top:1341.40px;width:145.90px;height:36.70px;background:#9cd53c;border-radius:13.5px"></div>
<div class="t" style="left:1509.50px;top:1347.48px;font-size:24.40px;line-height:31.72px;color:#222;font-family:'Liberation Sans', sans-serif;transform:scale(1.0051,1.0000);transform-origin:0 24.32px;">Completed</div>
<div class="b" style="left:2054.00px;top:1344.80px;width:29.00px;height:29.00px;border:2px solid #333;border-radius:4.5px"></div>
<div class="t" style="left:47.00px;top:1382.06px;font-size:24.40px;line-height:31.72px;color:#2c2c2c;font-family:'Liberation Sans', sans-serif;">Office Supplies</div>
<div class="t" style="left:295.70px;top:1382.06px;font-size:24.40px;line-height:31.72px;color:#2c2c2c;font-family:'Liberation Sans', sans-serif;">Binders</div>
<div class="t" style="left:545.40px;top:1382.06px;font-size:24.40px;line-height:31.72px;color:#2c2c2c;font-family:'Liberation Sans', sans-serif;">South</div>
<div class="t" style="left:872.50px;top:1385.63px;font-size:22.00px;line-height:28.60px;color:#2c2c2c;font-family:'Liberation Mono', monospace;transform:scale(1.0000,1.1000);transform-origin:0 20.15px;">37.03</div>
<div class="t" style="left:1052.20px;top:1385.63px;font-size:22.00px;line-height:28.60px;color:#2c2c2c;font-family:'Liberation Mono', monospace;transform:scale(1.0000,1.1000);transform-origin:0 20.15px;">3.90</div>
<div class="t" style="left:1192.28px;top:1385.63px;font-size:22.00px;line-height:28.60px;color:#2c2c2c;font-family:'Liberation Mono', monospace;transform:scale(1.0000,1.1000);transform-origin:0 20.15px;">981.00</div>
<div class="t" style="left:1359.28px;top:1385.63px;font-size:22.00px;line-height:28.60px;color:#2c2c2c;font-family:'Liberation Mono', monospace;transform:scale(1.0000,1.1000);transform-origin:0 20.15px;">132.00</div>
<div class="t" style="left:1802.00px;top:1385.63px;font-size:22.00px;line-height:28.60px;color:#2c2c2c;font-family:'Liberation Mono', monospace;transform:scale(1.0000,1.1000);transform-origin:0 20.15px;">92.58</div>
<div class="t" style="left:1981.20px;top:1385.63px;font-size:22.00px;line-height:28.60px;color:#2c2c2c;font-family:'Liberation Mono', monospace;transform:scale(1.0000,1.1000);transform-origin:0 20.15px;">9.75</div>
<div class="b" style="left:1494.35px;top:1378.88px;width:145.90px;height:35.62px;background:#9cd53c;border-radius:13.5px"></div>
<div class="t" style="left:1509.50px;top:1384.96px;font-size:24.40px;line-height:31.72px;color:#222;font-family:'Liberation Sans', sans-serif;transform:scale(1.0051,1.0000);transform-origin:0 24.32px;">Completed</div>
<div class="b" style="left:2054.00px;top:1382.28px;width:29.00px;height:29.00px;border:2px solid #333;border-radius:4.5px"></div>
<div class="b" style="left:2162.00px;top:890.74px;width:89.00px;height:39.50px;background:#f7f7f7;border:1px solid #dadada"></div>
<svg class="b" style="left:2176.00px;top:898.54px" width="42.00" height="34.00" viewBox="0 0 42 34" fill="none"><path d="M24 2 H2.5 V24 H8" stroke="#333" stroke-width="2.2" fill="none"/><rect x="9" y="10" width="18" height="22" stroke="#1f5fbf" stroke-width="2.2" fill="#f7f7f7"/><path d="M20 21 H36 M32 17 L36.5 21 L32 25" stroke="#1f5fbf" stroke-width="2" fill="none"/></svg>
<svg class="b" style="left:2220.00px;top:907.54px" width="20.00" height="13.00" viewBox="0 0 20 13" fill="none"><polyline points="2,2 9,9 16,2" stroke="#333" stroke-width="2.6" fill="none"/></svg>
<div class="b" style="left:2256.30px;top:302.10px;width:251.30px;height:642.50px;border:2.6px solid #ff0000;border-radius:7.5px;box-shadow:0 0 10px 1px rgba(0,0,0,0.12), inset 0 0 10px 1px rgba(0,0,0,0.22)"></div>
<div class="b" style="left:3.30px;top:1421.70px;width:2640.60px;height:2.20px;background:#e3e3e3"></div>
<div class="t" style="left:3.30px;top:1435.08px;font-size:24.00px;line-height:31.20px;color:#2c2c2c;font-family:'Liberation Sans', sans-serif;transform:scale(1.0199,1.0000);transform-origin:0 23.92px;">Total rows: 68</div>
<svg class="b" style="left:1786.00px;top:1433.20px" width="38.00" height="38.00" viewBox="0 0 38 38" fill="none"><path d="M15.20,7.91 L15.89,3.13 L21.31,3.13 L22.00,7.91 L23.97,8.73 L27.84,5.84 L31.66,9.66 L28.77,13.53 L29.59,15.50 L34.37,16.19 L34.37,21.61 L29.59,22.30 L28.77,24.27 L31.66,28.14 L27.84,31.96 L23.97,29.07 L22.00,29.89 L21.31,34.67 L15.89,34.67 L15.20,29.89 L13.23,29.07 L9.36,31.96 L5.54,28.14 L8.43,24.27 L7.61,22.30 L2.83,21.61 L2.83,16.19 L7.61,15.50 L8.43,13.53 L5.54,9.66 L9.36,5.84 L13.23,8.73 Z" stroke="#333" stroke-width="1.7" fill="none" stroke-linejoin="round"/><circle cx="18.60" cy="18.90" r="6.3" stroke="#1d5ab9" stroke-width="1.8"/></svg>
<div class="b" style="left:1843.20px;top:1452.40px;width:20.50px;height:2.10px;background:#333"></div>
<div class="b" style="left:1881.20px;top:1434.10px;width:114.30px;height:41.30px;border:1.5px solid #b8b8b8"></div>
<div class="t" style="left:1907.90px;top:1444.35px;font-size:22.00px;line-height:28.60px;color:#2c2c2c;font-family:'Liberation Mono', monospace;transform:scale(0.9672,1.1000);transform-origin:0 20.15px;">100</div>
<div class="t" style="left:1951.50px;top:1442.57px;font-size:22.00px;line-height:28.60px;color:#2c2c2c;font-family:'Liberation Sans', sans-serif;transform:scale(0.9664,1.0000);transform-origin:0 21.93px;">%</div>
<div class="b" style="left:2007.50px;top:1452.40px;width:21.40px;height:2.10px;background:#333"></div>
<div class="b" style="left:2017.20px;top:1443.00px;width:2.10px;height:22.00px;background:#333"></div>
<div class="b" style="left:2070.20px;top:1440.50px;width:3.60px;height:21.00px;background:#a9a9a9"></div>
<svg class="b" style="left:2076.00px;top:1440.60px" width="18.00" height="24.00" viewBox="0 0 18 24" fill="none"><polyline points="13.5,2 4,11 13.5,20" stroke="#a9a9a9" stroke-width="3.4" fill="none"/></svg>
<svg class="b" style="left:2101.00px;top:1440.60px" width="18.00" height="24.00" viewBox="0 0 18 24" fill="none"><polyline points="13.5,2 4,11 13.5,20" stroke="#a9a9a9" stroke-width="3.4" fill="none"/></svg>
<div class="t" style="left:2130.40px;top:1435.18px;font-size:24.00px;line-height:31.20px;color:#2c2c2c;font-family:'Liberation Sans', sans-serif;transform:scale(0.8690,1.0000);transform-origin:0 23.92px;">Page</div>
<div class="b" style="left:2189.00px;top:1429.40px;width:50.90px;height:40.90px;border:1.2px solid #dcdcdc"></div>
<div class="t" style="left:2209.50px;top:1435.18px;font-size:24.00px;line-height:31.20px;color:#2c2c2c;font-family:'Liberation Sans', sans-serif;transform:scale(0.7869,1.0000);transform-origin:0 23.92px;">1</div>
<div class="t" style="left:2249.90px;top:1435.18px;font-size:24.00px;line-height:31.20px;color:#2c2c2c;font-family:'Liberation Sans', sans-serif;transform:scale(0.9817,1.0000);transform-origin:0 23.92px;">of 3</div>
<svg class="b" style="left:2300.00px;top:1440.60px" width="18.00" height="24.00" viewBox="0 0 18 24" fill="none"><polyline points="4,2 13.5,11 4,20" stroke="#262626" stroke-width="3.4" fill="none"/></svg>
<svg class="b" style="left:2325.00px;top:1440.60px" width="18.00" height="24.00" viewBox="0 0 18 24" fill="none"><polyline points="4,2 13.5,11 4,20" stroke="#262626" stroke-width="3.4" fill="none"/></svg>
<div class="b" style="left:2345.20px;top:1440.50px;width:3.80px;height:21.00px;background:#262626"></div>
<div class="t" style="left:2450.00px;top:1435.38px;font-size:24.00px;line-height:31.20px;color:#2c2c2c;font-family:'Liberation Sans', sans-serif;transform:scale(0.7644,1.0000);transform-origin:0 23.92px;">1</div>
<div class="t" style="left:2472.90px;top:1435.38px;font-size:24.00px;line-height:31.20px;color:#2c2c2c;font-family:'Liberation Sans', sans-serif;transform:scale(1.0442,1.0000);transform-origin:0 23.92px;">to</div>
<div class="t" style="left:2506.50px;top:1435.38px;font-size:24.00px;line-height:31.20px;color:#2c2c2c;font-family:'Liberation Sans', sans-serif;transform:scale(0.9255,1.0000);transform-origin:0 23.92px;">27</div>
<div class="t" style="left:2544.00px;top:1435.38px;font-size:24.00px;line-height:31.20px;color:#2c2c2c;font-family:'Liberation Sans', sans-serif;transform:scale(1.0566,1.0000);transform-origin:0 23.92px;">of</div>
<div class="t" style="left:2576.70px;top:1435.38px;font-size:24.00px;line-height:31.20px;color:#2c2c2c;font-family:'Liberation Sans', sans-serif;transform:scale(0.9218,1.0000);transform-origin:0 23.92px;">68</div>
<div class="b" style="left:2609.00px;top:1434.90px;width:34.90px;height:8.10px;background:#ee3c3c"></div>
<div class="b" style="left:2609.00px;top:1445.00px;width:6.80px;height:12.40px;background:#f5ae1e"></div>
<div class="b" style="left:2617.50px;top:1445.00px;width:14.90px;height:12.40px;background:#6cbf4d"></div>
<div class="b" style="left:2634.00px;top:1445.00px;width:9.90px;height:12.40px;background:#6cbf4d"></div>
<div class="b" style="left:2609.00px;top:1458.70px;width:6.80px;height:10.40px;background:#f5ae1e"></div>
<div class="b" style="left:2617.50px;top:1458.70px;width:14.90px;height:10.40px;background:#6cbf4d"></div>
<div class="b" style="left:2634.00px;top:1458.70px;width:9.90px;height:10.40px;background:#6cbf4d"></div>
</div></body></html>
